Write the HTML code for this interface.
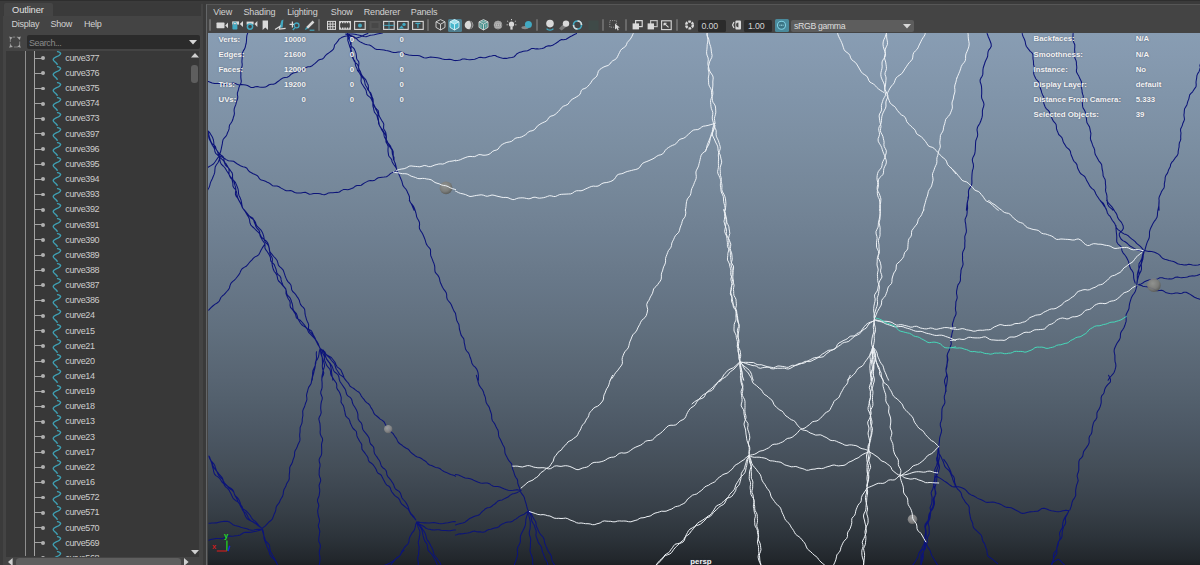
<!DOCTYPE html>
<html><head><meta charset="utf-8"><title>Maya</title>
<style>
html,body{margin:0;padding:0}
body{width:1200px;height:565px;overflow:hidden;position:relative;background:#444444;font-family:"Liberation Sans","DejaVu Sans",sans-serif;font-size:9px;color:#d0d0d0}
div,i,span,svg{position:absolute;display:block}
.topstrip{left:0;top:0;width:1200px;height:4px;background:linear-gradient(to bottom,#2e2e2e 0,#2e2e2e 1.5px,#3b3b3b 1.5px,#3b3b3b 4px)}
.leftstrip{left:0;top:2px;width:3px;height:563px;background:#3b3b3b}
  .midstrip{left:202.5px;top:2px;width:3.5px;height:563px;background:#3a3a3a}
.tabbar{left:3px;top:3px;width:198px;height:13px;background:#3a3a3a}
.tab{left:4px;top:3px;width:49px;height:13px;background:#454545;border-radius:2px 2px 0 0}
.tab span{left:8px;top:1.5px;font-size:9.3px;color:#e0e0e0;white-space:nowrap;letter-spacing:-0.1px}
.menu span{top:18.5px;font-size:9px;color:#d2d2d2;white-space:nowrap;letter-spacing:-0.25px}
.search{left:26.5px;top:35.3px;width:173px;height:13.7px;background:#2b2b2b;border-radius:2px}
.search span{left:2.5px;top:2.3px;color:#8a8a8a;font-size:9px;letter-spacing:-0.42px}
  .list{left:6.4px;top:50.6px;width:192.2px;height:506.5px;background:#383838;overflow:hidden}
.row{left:-6.4px;width:200px;height:15px}
.row span{left:65.3px;top:2.2px;font-size:9px;color:#cdcdcd;white-space:nowrap;letter-spacing:-0.4px}
.row .tk{left:35px;top:7px;width:7px;height:1px;background:#a2a2a2}
.row .dot{left:40.8px;top:5.6px;width:3.8px;height:3.8px;border-radius:2px;background:#b0b0b0}
.row .ci{left:51.5px;top:0.6px}
.vline{left:19px;top:0;width:1px;height:505px;background:#8e8e8e}
.vline2{left:28px;top:0;width:1px;height:505px;background:#a4a4a4}
.vpframe{left:205.8px;top:4px;width:994.2px;height:561px;border-left:1.5px solid #646668;border-top:1px solid #565656;box-sizing:border-box}
.vp{left:207.5px;top:32.7px;width:992.5px;height:549px;background:linear-gradient(to bottom,rgb(136,157,179) 0.00%,rgb(134,154,176) 4.17%,rgb(131,151,172) 8.33%,rgb(128,148,169) 12.50%,rgb(126,145,165) 16.67%,rgb(123,142,161) 20.83%,rgb(120,138,157) 25.00%,rgb(117,135,153) 29.17%,rgb(114,131,149) 33.33%,rgb(110,127,145) 37.50%,rgb(107,123,140) 41.67%,rgb(103,119,136) 45.83%,rgb(100,115,131) 50.00%,rgb(96,111,126) 54.17%,rgb(92,106,120) 58.33%,rgb(88,101,115) 62.50%,rgb(83,96,109) 66.67%,rgb(78,90,103) 70.83%,rgb(73,84,96) 75.00%,rgb(68,78,88) 79.17%,rgb(61,70,80) 83.33%,rgb(54,62,70) 87.50%,rgb(45,52,59) 91.67%,rgb(34,39,44) 95.83%,rgb(13,13,13) 100.00%);overflow:hidden}
.hud{font-family:"Liberation Sans",sans-serif;font-weight:bold;font-size:7.8px;line-height:10px;color:#f4f4f4;white-space:nowrap;text-shadow:0 0 1.5px rgba(60,70,95,.75)}
  .vmenu span{top:6.8px;font-size:9px;color:#d2d2d2;white-space:nowrap;letter-spacing:-0.15px}
.fld{top:20px;height:11.5px;background:#2b2b2b;border-radius:1.5px}
.fld span{top:1.3px;font-size:8.8px;color:#d4d4d4;letter-spacing:-0.2px}
</style></head><body>
<div class="topstrip"></div><div class="leftstrip"></div><div class="midstrip"></div>
<div class="tabbar"></div>
<div class="tab"><span>Outliner</span></div>
<div class="menu"><span style="left:11.6px">Display</span><span style="left:50.5px">Show</span><span style="left:84px">Help</span></div>
<svg width="14" height="14" viewBox="0 0 14 14" style="left:8.3px;top:34.8px"><rect x="2.4" y="2.2" width="9.2" height="9.8" rx="2.6" fill="none" stroke="#787878" stroke-width="1.2" stroke-dasharray="4.2 1.6" stroke-dashoffset="2"/><path d="M1.2 1.4L4.6 2.4L2.2 4.8Z M12.8 1.4L9.4 2.4L11.8 4.8Z M1.2 12.8L4.6 11.8L2.2 9.4Z M12.8 12.8L9.4 11.8L11.8 9.4Z" fill="#a6a6a6"/></svg>
<div class="search"><span>Search...</span><svg width="8" height="5" viewBox="0 0 8 5" style="left:162px;top:5px"><path d="M0 0H8L4 4.6Z" fill="#d6d6d6"/></svg></div>
<div class="list">
<div class="vline"></div><div class="vline2"></div>
<div class="row" style="top:0.1px"><i class="tk"></i><i class="dot"></i><svg class="ci" width="11" height="14" viewBox="0 0 11 14"><path d="M5.6 0.6 C8.6 1.4 9.6 2.6 7.4 4.2 C5 5.9 1.2 6.6 1.2 8.6 C1.2 10.2 3 10.6 4.4 12.2 L5.2 13.2" fill="none" stroke="#3f9fb2" stroke-width="1.4" stroke-linecap="round"/></svg><span>curve377</span></div>
<div class="row" style="top:15.3px"><i class="tk"></i><i class="dot"></i><svg class="ci" width="11" height="14" viewBox="0 0 11 14"><path d="M5.6 0.6 C8.6 1.4 9.6 2.6 7.4 4.2 C5 5.9 1.2 6.6 1.2 8.6 C1.2 10.2 3 10.6 4.4 12.2 L5.2 13.2" fill="none" stroke="#3f9fb2" stroke-width="1.4" stroke-linecap="round"/></svg><span>curve376</span></div>
<div class="row" style="top:30.4px"><i class="tk"></i><i class="dot"></i><svg class="ci" width="11" height="14" viewBox="0 0 11 14"><path d="M5.6 0.6 C8.6 1.4 9.6 2.6 7.4 4.2 C5 5.9 1.2 6.6 1.2 8.6 C1.2 10.2 3 10.6 4.4 12.2 L5.2 13.2" fill="none" stroke="#3f9fb2" stroke-width="1.4" stroke-linecap="round"/></svg><span>curve375</span></div>
<div class="row" style="top:45.6px"><i class="tk"></i><i class="dot"></i><svg class="ci" width="11" height="14" viewBox="0 0 11 14"><path d="M5.6 0.6 C8.6 1.4 9.6 2.6 7.4 4.2 C5 5.9 1.2 6.6 1.2 8.6 C1.2 10.2 3 10.6 4.4 12.2 L5.2 13.2" fill="none" stroke="#3f9fb2" stroke-width="1.4" stroke-linecap="round"/></svg><span>curve374</span></div>
<div class="row" style="top:60.7px"><i class="tk"></i><i class="dot"></i><svg class="ci" width="11" height="14" viewBox="0 0 11 14"><path d="M5.6 0.6 C8.6 1.4 9.6 2.6 7.4 4.2 C5 5.9 1.2 6.6 1.2 8.6 C1.2 10.2 3 10.6 4.4 12.2 L5.2 13.2" fill="none" stroke="#3f9fb2" stroke-width="1.4" stroke-linecap="round"/></svg><span>curve373</span></div>
<div class="row" style="top:75.8px"><i class="tk"></i><i class="dot"></i><svg class="ci" width="11" height="14" viewBox="0 0 11 14"><path d="M5.6 0.6 C8.6 1.4 9.6 2.6 7.4 4.2 C5 5.9 1.2 6.6 1.2 8.6 C1.2 10.2 3 10.6 4.4 12.2 L5.2 13.2" fill="none" stroke="#3f9fb2" stroke-width="1.4" stroke-linecap="round"/></svg><span>curve397</span></div>
<div class="row" style="top:91.0px"><i class="tk"></i><i class="dot"></i><svg class="ci" width="11" height="14" viewBox="0 0 11 14"><path d="M5.6 0.6 C8.6 1.4 9.6 2.6 7.4 4.2 C5 5.9 1.2 6.6 1.2 8.6 C1.2 10.2 3 10.6 4.4 12.2 L5.2 13.2" fill="none" stroke="#3f9fb2" stroke-width="1.4" stroke-linecap="round"/></svg><span>curve396</span></div>
<div class="row" style="top:106.2px"><i class="tk"></i><i class="dot"></i><svg class="ci" width="11" height="14" viewBox="0 0 11 14"><path d="M5.6 0.6 C8.6 1.4 9.6 2.6 7.4 4.2 C5 5.9 1.2 6.6 1.2 8.6 C1.2 10.2 3 10.6 4.4 12.2 L5.2 13.2" fill="none" stroke="#3f9fb2" stroke-width="1.4" stroke-linecap="round"/></svg><span>curve395</span></div>
<div class="row" style="top:121.3px"><i class="tk"></i><i class="dot"></i><svg class="ci" width="11" height="14" viewBox="0 0 11 14"><path d="M5.6 0.6 C8.6 1.4 9.6 2.6 7.4 4.2 C5 5.9 1.2 6.6 1.2 8.6 C1.2 10.2 3 10.6 4.4 12.2 L5.2 13.2" fill="none" stroke="#3f9fb2" stroke-width="1.4" stroke-linecap="round"/></svg><span>curve394</span></div>
<div class="row" style="top:136.5px"><i class="tk"></i><i class="dot"></i><svg class="ci" width="11" height="14" viewBox="0 0 11 14"><path d="M5.6 0.6 C8.6 1.4 9.6 2.6 7.4 4.2 C5 5.9 1.2 6.6 1.2 8.6 C1.2 10.2 3 10.6 4.4 12.2 L5.2 13.2" fill="none" stroke="#3f9fb2" stroke-width="1.4" stroke-linecap="round"/></svg><span>curve393</span></div>
<div class="row" style="top:151.6px"><i class="tk"></i><i class="dot"></i><svg class="ci" width="11" height="14" viewBox="0 0 11 14"><path d="M5.6 0.6 C8.6 1.4 9.6 2.6 7.4 4.2 C5 5.9 1.2 6.6 1.2 8.6 C1.2 10.2 3 10.6 4.4 12.2 L5.2 13.2" fill="none" stroke="#3f9fb2" stroke-width="1.4" stroke-linecap="round"/></svg><span>curve392</span></div>
<div class="row" style="top:166.8px"><i class="tk"></i><i class="dot"></i><svg class="ci" width="11" height="14" viewBox="0 0 11 14"><path d="M5.6 0.6 C8.6 1.4 9.6 2.6 7.4 4.2 C5 5.9 1.2 6.6 1.2 8.6 C1.2 10.2 3 10.6 4.4 12.2 L5.2 13.2" fill="none" stroke="#3f9fb2" stroke-width="1.4" stroke-linecap="round"/></svg><span>curve391</span></div>
<div class="row" style="top:181.9px"><i class="tk"></i><i class="dot"></i><svg class="ci" width="11" height="14" viewBox="0 0 11 14"><path d="M5.6 0.6 C8.6 1.4 9.6 2.6 7.4 4.2 C5 5.9 1.2 6.6 1.2 8.6 C1.2 10.2 3 10.6 4.4 12.2 L5.2 13.2" fill="none" stroke="#3f9fb2" stroke-width="1.4" stroke-linecap="round"/></svg><span>curve390</span></div>
<div class="row" style="top:197.1px"><i class="tk"></i><i class="dot"></i><svg class="ci" width="11" height="14" viewBox="0 0 11 14"><path d="M5.6 0.6 C8.6 1.4 9.6 2.6 7.4 4.2 C5 5.9 1.2 6.6 1.2 8.6 C1.2 10.2 3 10.6 4.4 12.2 L5.2 13.2" fill="none" stroke="#3f9fb2" stroke-width="1.4" stroke-linecap="round"/></svg><span>curve389</span></div>
<div class="row" style="top:212.2px"><i class="tk"></i><i class="dot"></i><svg class="ci" width="11" height="14" viewBox="0 0 11 14"><path d="M5.6 0.6 C8.6 1.4 9.6 2.6 7.4 4.2 C5 5.9 1.2 6.6 1.2 8.6 C1.2 10.2 3 10.6 4.4 12.2 L5.2 13.2" fill="none" stroke="#3f9fb2" stroke-width="1.4" stroke-linecap="round"/></svg><span>curve388</span></div>
<div class="row" style="top:227.3px"><i class="tk"></i><i class="dot"></i><svg class="ci" width="11" height="14" viewBox="0 0 11 14"><path d="M5.6 0.6 C8.6 1.4 9.6 2.6 7.4 4.2 C5 5.9 1.2 6.6 1.2 8.6 C1.2 10.2 3 10.6 4.4 12.2 L5.2 13.2" fill="none" stroke="#3f9fb2" stroke-width="1.4" stroke-linecap="round"/></svg><span>curve387</span></div>
<div class="row" style="top:242.5px"><i class="tk"></i><i class="dot"></i><svg class="ci" width="11" height="14" viewBox="0 0 11 14"><path d="M5.6 0.6 C8.6 1.4 9.6 2.6 7.4 4.2 C5 5.9 1.2 6.6 1.2 8.6 C1.2 10.2 3 10.6 4.4 12.2 L5.2 13.2" fill="none" stroke="#3f9fb2" stroke-width="1.4" stroke-linecap="round"/></svg><span>curve386</span></div>
<div class="row" style="top:257.6px"><i class="tk"></i><i class="dot"></i><svg class="ci" width="11" height="14" viewBox="0 0 11 14"><path d="M5.6 0.6 C8.6 1.4 9.6 2.6 7.4 4.2 C5 5.9 1.2 6.6 1.2 8.6 C1.2 10.2 3 10.6 4.4 12.2 L5.2 13.2" fill="none" stroke="#3f9fb2" stroke-width="1.4" stroke-linecap="round"/></svg><span>curve24</span></div>
<div class="row" style="top:272.8px"><i class="tk"></i><i class="dot"></i><svg class="ci" width="11" height="14" viewBox="0 0 11 14"><path d="M5.6 0.6 C8.6 1.4 9.6 2.6 7.4 4.2 C5 5.9 1.2 6.6 1.2 8.6 C1.2 10.2 3 10.6 4.4 12.2 L5.2 13.2" fill="none" stroke="#3f9fb2" stroke-width="1.4" stroke-linecap="round"/></svg><span>curve15</span></div>
<div class="row" style="top:287.9px"><i class="tk"></i><i class="dot"></i><svg class="ci" width="11" height="14" viewBox="0 0 11 14"><path d="M5.6 0.6 C8.6 1.4 9.6 2.6 7.4 4.2 C5 5.9 1.2 6.6 1.2 8.6 C1.2 10.2 3 10.6 4.4 12.2 L5.2 13.2" fill="none" stroke="#3f9fb2" stroke-width="1.4" stroke-linecap="round"/></svg><span>curve21</span></div>
<div class="row" style="top:303.1px"><i class="tk"></i><i class="dot"></i><svg class="ci" width="11" height="14" viewBox="0 0 11 14"><path d="M5.6 0.6 C8.6 1.4 9.6 2.6 7.4 4.2 C5 5.9 1.2 6.6 1.2 8.6 C1.2 10.2 3 10.6 4.4 12.2 L5.2 13.2" fill="none" stroke="#3f9fb2" stroke-width="1.4" stroke-linecap="round"/></svg><span>curve20</span></div>
<div class="row" style="top:318.2px"><i class="tk"></i><i class="dot"></i><svg class="ci" width="11" height="14" viewBox="0 0 11 14"><path d="M5.6 0.6 C8.6 1.4 9.6 2.6 7.4 4.2 C5 5.9 1.2 6.6 1.2 8.6 C1.2 10.2 3 10.6 4.4 12.2 L5.2 13.2" fill="none" stroke="#3f9fb2" stroke-width="1.4" stroke-linecap="round"/></svg><span>curve14</span></div>
<div class="row" style="top:333.4px"><i class="tk"></i><i class="dot"></i><svg class="ci" width="11" height="14" viewBox="0 0 11 14"><path d="M5.6 0.6 C8.6 1.4 9.6 2.6 7.4 4.2 C5 5.9 1.2 6.6 1.2 8.6 C1.2 10.2 3 10.6 4.4 12.2 L5.2 13.2" fill="none" stroke="#3f9fb2" stroke-width="1.4" stroke-linecap="round"/></svg><span>curve19</span></div>
<div class="row" style="top:348.5px"><i class="tk"></i><i class="dot"></i><svg class="ci" width="11" height="14" viewBox="0 0 11 14"><path d="M5.6 0.6 C8.6 1.4 9.6 2.6 7.4 4.2 C5 5.9 1.2 6.6 1.2 8.6 C1.2 10.2 3 10.6 4.4 12.2 L5.2 13.2" fill="none" stroke="#3f9fb2" stroke-width="1.4" stroke-linecap="round"/></svg><span>curve18</span></div>
<div class="row" style="top:363.7px"><i class="tk"></i><i class="dot"></i><svg class="ci" width="11" height="14" viewBox="0 0 11 14"><path d="M5.6 0.6 C8.6 1.4 9.6 2.6 7.4 4.2 C5 5.9 1.2 6.6 1.2 8.6 C1.2 10.2 3 10.6 4.4 12.2 L5.2 13.2" fill="none" stroke="#3f9fb2" stroke-width="1.4" stroke-linecap="round"/></svg><span>curve13</span></div>
<div class="row" style="top:378.8px"><i class="tk"></i><i class="dot"></i><svg class="ci" width="11" height="14" viewBox="0 0 11 14"><path d="M5.6 0.6 C8.6 1.4 9.6 2.6 7.4 4.2 C5 5.9 1.2 6.6 1.2 8.6 C1.2 10.2 3 10.6 4.4 12.2 L5.2 13.2" fill="none" stroke="#3f9fb2" stroke-width="1.4" stroke-linecap="round"/></svg><span>curve23</span></div>
<div class="row" style="top:394.0px"><i class="tk"></i><i class="dot"></i><svg class="ci" width="11" height="14" viewBox="0 0 11 14"><path d="M5.6 0.6 C8.6 1.4 9.6 2.6 7.4 4.2 C5 5.9 1.2 6.6 1.2 8.6 C1.2 10.2 3 10.6 4.4 12.2 L5.2 13.2" fill="none" stroke="#3f9fb2" stroke-width="1.4" stroke-linecap="round"/></svg><span>curve17</span></div>
<div class="row" style="top:409.1px"><i class="tk"></i><i class="dot"></i><svg class="ci" width="11" height="14" viewBox="0 0 11 14"><path d="M5.6 0.6 C8.6 1.4 9.6 2.6 7.4 4.2 C5 5.9 1.2 6.6 1.2 8.6 C1.2 10.2 3 10.6 4.4 12.2 L5.2 13.2" fill="none" stroke="#3f9fb2" stroke-width="1.4" stroke-linecap="round"/></svg><span>curve22</span></div>
<div class="row" style="top:424.3px"><i class="tk"></i><i class="dot"></i><svg class="ci" width="11" height="14" viewBox="0 0 11 14"><path d="M5.6 0.6 C8.6 1.4 9.6 2.6 7.4 4.2 C5 5.9 1.2 6.6 1.2 8.6 C1.2 10.2 3 10.6 4.4 12.2 L5.2 13.2" fill="none" stroke="#3f9fb2" stroke-width="1.4" stroke-linecap="round"/></svg><span>curve16</span></div>
<div class="row" style="top:439.4px"><i class="tk"></i><i class="dot"></i><svg class="ci" width="11" height="14" viewBox="0 0 11 14"><path d="M5.6 0.6 C8.6 1.4 9.6 2.6 7.4 4.2 C5 5.9 1.2 6.6 1.2 8.6 C1.2 10.2 3 10.6 4.4 12.2 L5.2 13.2" fill="none" stroke="#3f9fb2" stroke-width="1.4" stroke-linecap="round"/></svg><span>curve572</span></div>
<div class="row" style="top:454.6px"><i class="tk"></i><i class="dot"></i><svg class="ci" width="11" height="14" viewBox="0 0 11 14"><path d="M5.6 0.6 C8.6 1.4 9.6 2.6 7.4 4.2 C5 5.9 1.2 6.6 1.2 8.6 C1.2 10.2 3 10.6 4.4 12.2 L5.2 13.2" fill="none" stroke="#3f9fb2" stroke-width="1.4" stroke-linecap="round"/></svg><span>curve571</span></div>
<div class="row" style="top:469.8px"><i class="tk"></i><i class="dot"></i><svg class="ci" width="11" height="14" viewBox="0 0 11 14"><path d="M5.6 0.6 C8.6 1.4 9.6 2.6 7.4 4.2 C5 5.9 1.2 6.6 1.2 8.6 C1.2 10.2 3 10.6 4.4 12.2 L5.2 13.2" fill="none" stroke="#3f9fb2" stroke-width="1.4" stroke-linecap="round"/></svg><span>curve570</span></div>
<div class="row" style="top:484.9px"><i class="tk"></i><i class="dot"></i><svg class="ci" width="11" height="14" viewBox="0 0 11 14"><path d="M5.6 0.6 C8.6 1.4 9.6 2.6 7.4 4.2 C5 5.9 1.2 6.6 1.2 8.6 C1.2 10.2 3 10.6 4.4 12.2 L5.2 13.2" fill="none" stroke="#3f9fb2" stroke-width="1.4" stroke-linecap="round"/></svg><span>curve569</span></div>
<div class="row" style="top:500.0px"><i class="tk"></i><i class="dot"></i><svg class="ci" width="11" height="14" viewBox="0 0 11 14"><path d="M5.6 0.6 C8.6 1.4 9.6 2.6 7.4 4.2 C5 5.9 1.2 6.6 1.2 8.6 C1.2 10.2 3 10.6 4.4 12.2 L5.2 13.2" fill="none" stroke="#3f9fb2" stroke-width="1.4" stroke-linecap="round"/></svg><span>curve568</span></div>
<svg width="8" height="5" viewBox="0 0 8 5" style="left:184.9px;top:2px"><path d="M0 4.6H8L4 0Z" fill="#d0d0d0"/></svg>
<div style="left:185px;top:14.5px;width:7px;height:17.5px;border-radius:3px;background:#5e5e5e"></div>
<svg width="8" height="5" viewBox="0 0 8 5" style="left:184.7px;top:499.6px"><path d="M0 0H8L4 4.6Z" fill="#d0d0d0"/></svg>
</div>
<svg width="5" height="8" viewBox="0 0 5 8" style="left:7.5px;top:557.5px"><path d="M4.6 0V8L0 4Z" fill="#d0d0d0"/></svg>
<div style="left:15.5px;top:557.8px;width:165px;height:9px;border-radius:3.5px;background:#5e5e5e"></div>
<svg width="5" height="8" viewBox="0 0 5 8" style="left:183.5px;top:557.5px"><path d="M0 0V8L4.6 4Z" fill="#d0d0d0"/></svg>
<div class="vpframe"></div>
<div class="vmenu"><span style="left:213.3px">View</span><span style="left:243.5px">Shading</span><span style="left:287.2px">Lighting</span><span style="left:330.8px">Show</span><span style="left:363.7px">Renderer</span><span style="left:410.8px">Panels</span></div>
<div style="left:209.1px;top:19.3px;width:2.2px;height:12px;border-radius:1.1px;background:#6a6a6a"></div>
<svg width="13" height="14" viewBox="0 0 13 14" style="left:216px;top:18px"><rect x="0.5" y="4.6" width="8" height="5.6" rx="0.6" fill="#d9d9d9"/><path d="M12 4.6V10.2L9.2 7.4Z" fill="#d9d9d9"/></svg>
<svg width="13" height="14" viewBox="0 0 13 14" style="left:231px;top:18px"><rect x="1.2" y="3.4" width="6.8" height="3.2" fill="#d9d9d9"/><path d="M12 3V9L8.8 6Z" fill="#d9d9d9"/><rect x="1.4" y="6.6" width="5" height="5" rx="0.8" fill="#41a9c2"/><path d="M2.4 6.8V5.6a1.5 1.5 0 0 1 3 0V6.8" fill="none" stroke="#41a9c2" stroke-width="1"/></svg>
<svg width="13" height="14" viewBox="0 0 13 14" style="left:246px;top:18px"><rect x="0.6" y="3.6" width="7" height="3" fill="#d9d9d9"/><path d="M11.4 3V9L8.4 6Z" fill="#d9d9d9"/><circle cx="4" cy="8.6" r="2.6" fill="none" stroke="#41a9c2" stroke-width="1.5"/></svg>
<svg width="7" height="14" viewBox="0 0 7 14" style="left:262.4px;top:18px"><path d="M0.6 2.6H6V12L3.3 9.6L0.6 12Z" fill="#d9d9d9"/></svg>
<svg width="13" height="14" viewBox="0 0 13 14" style="left:273.5px;top:18px"><path d="M7.4 2.4L9.4 1.4L8.6 9.4L5.4 9.8Z" fill="#41a9c2"/><path d="M1 11.6L6 8.4L5.4 11L11.6 10.4" fill="none" stroke="#d9d9d9" stroke-width="1.2"/></svg>
<svg width="12" height="14" viewBox="0 0 12 14" style="left:288.6px;top:18px"><path d="M0.6 6.4H6M3.4 3.4V9.4" stroke="#d9d9d9" stroke-width="1.2"/><circle cx="7.6" cy="7.4" r="2.4" fill="none" stroke="#41a9c2" stroke-width="1.3"/><path d="M6 9.6L3.8 12" stroke="#41a9c2" stroke-width="1.4"/></svg>
<svg width="12" height="14" viewBox="0 0 12 14" style="left:303.6px;top:18px"><path d="M2.2 9L8.6 2.6L10.4 4.4L4 10.8Z" fill="#d9d9d9"/><path d="M0.8 12L2.2 9L4 10.8Z" fill="#41a9c2"/><path d="M5.6 12.2H10.4" stroke="#41a9c2" stroke-width="1.1"/></svg>
<div style="left:318.29999999999995px;top:19.3px;width:2.2px;height:12px;border-radius:1.1px;background:#6a6a6a"></div>
<svg width="9" height="14" viewBox="0 0 9 14" style="left:326.8px;top:18px"><rect x="0.5" y="3.4" width="8" height="8" fill="none" stroke="#d9d9d9" stroke-width="1"/><path d="M3.2 3.4V11.4M5.8 3.4V11.4M0.5 6.1H8.5M0.5 8.7H8.5" stroke="#d9d9d9" stroke-width="0.9"/></svg>
<svg width="12" height="14" viewBox="0 0 12 14" style="left:339.2px;top:18px"><rect x="0.6" y="3.6" width="10.8" height="7.6" fill="none" stroke="#d9d9d9" stroke-width="1.1"/><path d="M0.6 4.4H11.4M0.6 10.4H11.4" stroke="#d9d9d9" stroke-width="1.6" stroke-dasharray="1.4 1"/></svg>
<svg width="12" height="14" viewBox="0 0 12 14" style="left:353.8px;top:18px"><rect x="0.6" y="3.4" width="10.6" height="8" fill="none" stroke="#d9d9d9" stroke-width="1.1"/><circle cx="6" cy="7.4" r="2" fill="#41a9c2"/></svg>
<svg width="12" height="14" viewBox="0 0 12 14" style="left:368.6px;top:18px"><rect x="0.5" y="3" width="11" height="9" fill="#525252"/><rect x="2.6" y="5" width="6.8" height="5" fill="#474747"/></svg>
<svg width="12" height="14" viewBox="0 0 12 14" style="left:383px;top:18px"><rect x="0.6" y="3.4" width="10.6" height="8" fill="none" stroke="#d9d9d9" stroke-width="1.1"/><path d="M6 3.4V11.4M0.6 7.4H11.2" stroke="#41a9c2" stroke-width="0.9"/></svg>
<svg width="12" height="14" viewBox="0 0 12 14" style="left:397.2px;top:18px"><rect x="0.6" y="3.4" width="10.6" height="8" fill="none" stroke="#d9d9d9" stroke-width="1.1"/><circle cx="7" cy="6.4" r="1.7" fill="#41a9c2"/><path d="M1.6 10.6L4.6 7.4L7 10.6Z" fill="#41a9c2"/></svg>
<svg width="12" height="14" viewBox="0 0 12 14" style="left:411.8px;top:18px"><rect x="0.6" y="3.4" width="10.6" height="8" fill="none" stroke="#d9d9d9" stroke-width="1.1"/><path d="M3.4 5.4H8.4M5.9 5.4V10" stroke="#41a9c2" stroke-width="1.2"/></svg>
<div style="left:427.09999999999997px;top:19.3px;width:2.2px;height:12px;border-radius:1.1px;background:#6a6a6a"></div>
<svg width="11" height="14" viewBox="0 0 11 14" style="left:434.6px;top:18px"><path d="M5.5 1.6L10 3.8V9.4L5.5 12L1 9.4V3.8Z M1 3.8L5.5 6.2L10 3.8M5.5 6.2V12" fill="none" stroke="#d9d9d9" stroke-width="0.9"/></svg>
<div style="left:447.6px;top:18.6px;width:14px;height:13.6px;background:#4f7f90;border-radius:1.5px"></div>
<svg width="11" height="14" viewBox="0 0 11 14" style="left:449.2px;top:18px"><path d="M5.5 1.6L10 3.8V9.4L5.5 12L1 9.4V3.8Z" fill="#48b6cc"/><path d="M5.5 1.6L10 3.8L5.5 6.2L1 3.8Z" fill="#9fe0ec"/><path d="M5.5 1.6L10 3.8V9.4L5.5 12L1 9.4V3.8Z M1 3.8L5.5 6.2L10 3.8M5.5 6.2V12" fill="none" stroke="#d9f2f6" stroke-width="0.9"/></svg>
<svg width="10" height="14" viewBox="0 0 10 14" style="left:464px;top:18px"><circle cx="5" cy="7" r="4.3" fill="#d9d9d9"/><path d="M5.4 2.8A4.3 4.3 0 0 1 5.4 11.2A6 6 0 0 0 5.4 2.8Z" fill="#6a6a6a"/></svg>
<svg width="11" height="14" viewBox="0 0 11 14" style="left:478px;top:18px"><path d="M5.5 1.6L10 3.8V9.4L5.5 12L1 9.4V3.8Z" fill="#3f8f8a"/><path d="M5.5 1.6L10 3.8V9.4L5.5 12L1 9.4V3.8Z M1 3.8L5.5 6.2L10 3.8M5.5 6.2V12" fill="none" stroke="#d9d9d9" stroke-width="0.9"/><path d="M3 6.4V9.6M7.8 6.4V9.6M3.4 3.8L7.6 3.8" stroke="#d9d9d9" stroke-width="0.7"/></svg>
<svg width="10" height="14" viewBox="0 0 10 14" style="left:492.6px;top:18px"><circle cx="5" cy="7" r="4.3" fill="#8a8a8a"/><path d="M1.5 5H8.5M1 7H9M1.5 9H8.5M3 3.4V10.6M5 2.8V11.2M7 3.4V10.6" stroke="#d9d9d9" stroke-width="0.9" stroke-dasharray="1 1"/></svg>
<svg width="11" height="14" viewBox="0 0 11 14" style="left:506.4px;top:18px"><circle cx="5.5" cy="6.2" r="2.6" fill="#d9d9d9"/><rect x="4.4" y="8.6" width="2.2" height="3" fill="#d9d9d9"/><path d="M5.5 1V2.2M1.2 3L2.2 3.8M9.8 3L8.8 3.8M0.6 6.8H1.8M10.4 6.8H9.2" stroke="#d9d9d9" stroke-width="0.9"/></svg>
<svg width="12" height="14" viewBox="0 0 12 14" style="left:520.6px;top:18px"><ellipse cx="4" cy="9.6" rx="3.6" ry="1.6" fill="#8a8a8a"/><circle cx="7.4" cy="6.6" r="3.5" fill="#41a9c2"/></svg>
<div style="left:536.3px;top:19.3px;width:2.2px;height:12px;border-radius:1.1px;background:#6a6a6a"></div>
<svg width="10" height="14" viewBox="0 0 10 14" style="left:544.6px;top:18px"><circle cx="5" cy="5.6" r="3.8" fill="#d9d9d9"/><path d="M1.6 10.6C3 12.6 7 12.6 8.4 10.6" fill="none" stroke="#41a9c2" stroke-width="1.3"/></svg>
<svg width="12" height="14" viewBox="0 0 12 14" style="left:557.6px;top:18px"><path d="M1 10.6L6 5.2L9 8.2L3.6 12.6Z" fill="#7a7a7a"/><circle cx="8" cy="5.6" r="3.2" fill="#d9d9d9"/></svg>
<svg width="11" height="14" viewBox="0 0 11 14" style="left:572.2px;top:18px"><circle cx="5.5" cy="7" r="4" fill="none" stroke="#41a9c2" stroke-width="1.6"/><path d="M5.5 3A4 4 0 0 1 9.5 7" fill="none" stroke="#d9d9d9" stroke-width="1.6"/><path d="M5.5 11A4 4 0 0 1 1.5 7" fill="none" stroke="#d9d9d9" stroke-width="1.6"/></svg>
<svg width="11" height="14" viewBox="0 0 11 14" style="left:587.6px;top:18px"><rect x="0.5" y="2.4" width="10" height="10" fill="#3f4a48"/></svg>
<div style="left:602.1px;top:19.3px;width:2.2px;height:12px;border-radius:1.1px;background:#6a6a6a"></div>
<svg width="12" height="14" viewBox="0 0 12 14" style="left:608.8px;top:18px"><rect x="0.8" y="2.6" width="6.6" height="6.6" fill="none" stroke="#9a9a9a" stroke-width="0.9" stroke-dasharray="1.2 1"/><path d="M6 5.6L10.8 9.6L8.8 9.8L9.8 12L8.6 12.4L7.8 10.2L6 11.4Z" fill="#d9d9d9"/></svg>
<div style="left:624.5px;top:19.3px;width:2.2px;height:12px;border-radius:1.1px;background:#6a6a6a"></div>
<svg width="11" height="14" viewBox="0 0 11 14" style="left:632px;top:18px"><rect x="3.6" y="2.6" width="6.6" height="6" fill="none" stroke="#d9d9d9" stroke-width="1.2"/><rect x="0.6" y="5.4" width="6.4" height="6" fill="#d9d9d9"/></svg>
<svg width="11" height="14" viewBox="0 0 11 14" style="left:646.6px;top:18px"><rect x="3.6" y="2.6" width="6.6" height="6" fill="none" stroke="#bdbdbd" stroke-width="1.2"/><rect x="0.6" y="5.4" width="6.4" height="6" fill="#d9d9d9"/></svg>
<svg width="11" height="14" viewBox="0 0 11 14" style="left:660.6px;top:18px"><rect x="0.6" y="2.8" width="9.6" height="8.8" fill="none" stroke="#d9d9d9" stroke-width="1.1"/><path d="M3 5.2L7.6 9.4M3 5.2H5.6M3 5.2V7.6" stroke="#d9d9d9" stroke-width="1.1" fill="none"/></svg>
<div style="left:676.1999999999999px;top:19.3px;width:2.2px;height:12px;border-radius:1.1px;background:#6a6a6a"></div>
<svg width="11" height="14" viewBox="0 0 11 14" style="left:684.4px;top:18px"><circle cx="5.5" cy="7" r="3.4" fill="none" stroke="#d9d9d9" stroke-width="2.4" stroke-dasharray="2.6 1"/></svg>
<div class="fld" style="left:698px;width:28.4px"><span style="left:3.6px">0.00</span></div>
<svg width="10" height="14" viewBox="0 0 10 14" style="left:731.6px;top:18px"><path d="M2 4L0.6 7L2 10" fill="none" stroke="#d9d9d9" stroke-width="1.2"/><rect x="3.4" y="2.6" width="5.6" height="8.8" rx="1" fill="#d9d9d9"/><path d="M6.4 4.6A2.4 2.4 0 0 0 6.4 9.4Z" fill="#444"/></svg>
<div class="fld" style="left:743.7px;width:28.8px"><span style="left:4.4px">1.00</span></div>
<div style="left:774.8px;top:18.6px;width:14px;height:13.6px;background:#4a8a9c;border-radius:1.5px"></div>
<svg width="11" height="14" viewBox="0 0 11 14" style="left:776.3px;top:18px"><circle cx="5.5" cy="7.2" r="4" fill="#3b7484" stroke="#7fd0e2" stroke-width="1.1"/><path d="M3.4 7.2H7.6" stroke="#a8e4f0" stroke-width="1" stroke-dasharray="1 0.6"/></svg>
<div style="left:790.5px;top:19.6px;width:123.5px;height:12px;background:#5d5d5d;border-radius:2px"><span style="left:3.6px;top:1.2px;font-size:8.7px;color:#dedede;letter-spacing:-0.35px;white-space:nowrap">sRGB gamma</span><svg width="8" height="5" viewBox="0 0 8 5" style="left:112.6px;top:4px"><path d="M0 0H8L4 4.4Z" fill="#d8d8d8"/></svg></div>
<div class="vp">
<svg width="992.5" height="532.3" viewBox="207.5 32.7 992.5 532.3" style="left:0;top:0">
<defs><radialGradient id="sg" cx="40%" cy="35%" r="70%"><stop offset="0" stop-color="#a6a6a6"/><stop offset="0.6" stop-color="#8a8a8a"/><stop offset="1" stop-color="#646464"/></radialGradient><radialGradient id="sd" cx="42%" cy="36%" r="70%"><stop offset="0" stop-color="#959590"/><stop offset="0.6" stop-color="#7c7c77"/><stop offset="1" stop-color="#50504c"/></radialGradient></defs>
<path d="M248.0 30.0 L247.7 31.3 L247.1 33.1 L246.4 35.1 L246.1 37.6 L246.0 40.2 L245.7 42.9 L245.2 44.7 L244.8 46.7 L244.1 48.6 L242.8 50.6 L241.8 52.7 L241.6 55.0 L241.7 57.3 L241.5 59.6 L241.4 61.8 L241.7 63.9 L241.6 66.0 L240.8 68.1 L240.2 70.2 L240.3 72.4 L240.4 74.5 L240.3 76.7 L240.5 78.8 L240.8 80.8 L240.5 82.7 L239.5 84.8 L238.5 86.9 L238.1 88.9 L237.5 90.8 L236.9 92.6 L236.9 94.6 L237.3 96.6 L237.1 98.5 L236.3 100.6 L235.7 102.6 L235.2 104.6 L234.4 106.5 L233.7 108.5 L233.6 110.7 L233.9 113.0 L233.6 115.0 L232.9 116.9 L232.4 119.0 L231.6 121.0 L230.4 122.9 L229.1 124.7 L228.7 126.6 L228.6 128.6 L227.9 130.6 L227.0 132.5 L226.3 134.4 L225.3 136.1 L223.9 137.6 L222.6 139.2 L222.1 141.3 L221.8 143.6 L221.3 145.9 L220.8 148.4 L220.3 150.7 L219.6 152.8 L218.8 154.5 L218.4 155.8 M203.4 125.5 L204.4 127.2 L206.3 130.5 L207.3 131.9 L208.2 133.8 L208.8 136.1 L209.5 138.5 L210.3 140.8 L211.3 143.0 L213.2 144.6 L214.9 146.2 L215.5 148.2 L216.2 150.1 L217.6 151.7 L219.0 153.3 L220.7 155.0 L222.5 156.2 L223.3 158.0 L223.5 160.3 L224.4 162.2 L225.8 163.9 L226.9 165.8 L227.9 167.6 L228.6 169.4 L228.5 171.9 L228.5 174.2 L229.7 175.9 L230.9 177.5 L231.5 179.4 L232.0 181.3 L232.4 183.4 L232.4 185.6 L233.4 187.6 L235.1 189.3 L236.0 191.4 L236.3 193.6 L236.7 195.7 L237.4 197.6 L238.4 200.1 L239.9 202.4 L241.1 204.6 L241.7 206.6 L242.3 208.0 M203.4 125.5 L204.7 127.0 L207.0 130.1 L208.3 131.4 L209.7 133.1 L210.9 135.2 L212.1 137.3 L212.9 139.7 L213.3 142.1 L213.4 144.4 L214.0 146.7 L215.2 148.4 L216.4 150.0 L217.2 151.9 L217.8 154.0 L218.6 156.2 L219.2 158.1 L219.5 160.2 L219.9 162.3 L221.0 164.1 L222.7 165.7 L224.2 167.2 L225.3 169.0 L226.3 170.7 L227.5 172.4 L228.6 174.2 L229.3 176.1 L230.2 177.8 L231.8 179.3 L233.6 180.6 L235.0 182.3 L235.9 184.3 L236.7 186.4 L237.5 188.6 L237.9 190.8 L238.0 193.1 L238.5 195.1 L239.4 196.9 L240.4 199.4 L241.0 202.0 L241.4 204.5 L241.9 206.6 L242.3 208.0 M203.4 125.5 L204.6 127.0 L206.7 130.2 L207.6 131.8 L208.1 133.9 L208.1 136.4 L208.7 138.8 L209.9 141.0 L211.0 143.2 L212.0 145.2 L213.3 147.1 L214.1 149.0 L214.4 151.2 L215.2 153.1 L216.9 154.6 L218.6 156.2 L220.0 157.6 L221.6 159.0 L223.2 160.5 L224.0 162.5 L224.8 164.5 L226.2 166.1 L227.9 167.6 L229.1 169.1 L230.4 170.9 L231.6 172.6 L232.1 174.6 L232.0 176.9 L232.3 179.0 L233.2 180.8 L233.9 182.8 L234.4 184.9 L235.1 187.0 L235.4 189.2 L235.0 191.7 L234.9 194.0 L235.7 196.0 L237.1 197.7 L238.4 200.1 L239.7 202.5 L240.9 204.7 L241.6 206.7 L242.3 208.0 M206.6 167.6 L208.3 166.5 L210.8 165.1 L213.2 163.4 L214.6 161.5 L216.0 159.4 L217.3 157.6 L218.4 156.4 M207.2 189.6 L207.8 188.4 L208.7 186.9 L209.3 185.0 L209.8 182.8 L210.7 180.6 L211.8 178.4 L212.7 176.2 L213.6 174.1 L214.2 172.1 L214.4 169.5 L214.7 166.8 L215.9 164.5 L217.4 162.5 L218.4 160.5 L218.9 158.7 L219.3 157.4 M206.6 81.0 L207.9 81.3 L209.7 81.9 L211.7 82.8 L214.1 83.3 L216.8 83.1 L219.4 83.2 L221.3 84.0 L223.4 84.3 L225.6 84.3 L227.9 84.2 L230.2 83.5 L232.5 82.8 L234.8 83.1 L236.8 84.2 L238.9 84.6 L241.0 84.3 L243.1 84.4 L245.1 84.8 L247.0 85.2 L248.8 86.2 L250.7 87.3 L252.8 87.3 L254.8 86.4 L256.7 86.3 L258.8 86.8 L260.8 87.0 L262.9 87.0 L264.9 86.8 L266.8 85.7 L268.6 84.4 L270.6 83.9 L272.9 84.0 L274.9 83.2 L276.7 81.7 L278.5 80.4 L280.3 79.0 L282.2 77.8 L284.4 77.3 L286.8 77.0 L288.8 75.8 L290.6 73.9 L292.7 72.7 L295.0 72.1 L297.1 71.4 L299.2 70.9 L300.9 70.5 L303.5 68.9 L305.0 67.4 L307.5 66.5 L309.5 66.5 L311.2 65.8 L312.9 64.4 L314.6 63.1 L316.2 61.5 L317.7 60.0 L319.6 59.3 L321.9 58.8 L323.5 57.3 L324.8 55.4 L326.3 54.0 L327.9 52.9 L329.4 51.8 L331.2 50.5 L332.9 48.9 L333.7 46.8 L334.0 44.7 L335.3 43.4 L337.3 40.8 L338.6 38.8 L341.0 37.3 L343.6 36.3 L346.7 35.4 M346.7 32.5 L347.0 33.8 L347.3 35.6 L347.3 37.7 L347.3 40.1 L348.0 42.4 L348.8 44.7 L349.3 46.5 L350.0 48.2 L350.8 50.0 L350.9 52.0 L350.9 54.4 L351.7 56.7 L353.0 59.3 L353.7 60.8 L354.8 62.3 L356.5 63.7 L357.6 65.4 L358.1 67.4 L358.9 69.4 L359.9 71.3 L360.7 73.4 L361.6 75.4 L363.3 77.2 L365.0 79.0 L365.9 81.0 L366.8 83.1 L367.7 84.8 L367.9 86.9 L367.9 89.1 L368.6 91.0 L369.6 92.9 L370.3 94.9 L371.0 96.9 L372.0 98.8 L372.5 101.0 L372.3 103.4 L372.4 105.7 L373.0 107.7 L373.4 109.8 L373.9 111.8 L375.2 113.5 L376.4 115.2 L376.9 117.3 L377.4 119.3 L378.2 121.3 L378.6 123.3 L379.0 125.5 L380.1 127.3 L381.7 129.0 L382.7 130.8 L383.7 132.6 L384.9 134.3 L385.5 136.1 L385.5 138.1 L386.0 139.8 L386.9 141.3 L387.9 143.6 L388.8 145.8 L390.3 147.8 L391.5 149.7 L391.7 151.8 L391.9 153.8 L392.5 155.6 L392.8 157.3 L392.9 159.0 L393.5 160.3 L394.8 163.2 L395.4 165.5 L395.8 167.3 L396.1 168.5 M346.7 32.5 L346.8 33.9 L347.1 35.6 L347.8 37.6 L349.0 39.7 L349.9 41.9 L350.1 44.3 L351.0 46.0 L352.6 47.4 L353.9 48.9 L354.7 50.8 L355.5 52.8 L355.9 55.2 L356.1 58.1 L356.9 59.7 L358.1 61.1 L358.5 63.0 L358.2 65.2 L358.1 67.4 L358.3 69.6 L358.6 71.8 L359.5 73.8 L360.6 75.8 L360.7 78.2 L360.5 80.8 L361.1 83.0 L362.4 84.9 L363.4 86.6 L364.6 88.3 L365.6 90.1 L366.0 92.2 L366.5 94.3 L368.0 95.9 L369.9 97.4 L371.1 99.2 L371.9 101.2 L372.8 103.2 L373.4 105.2 L374.4 107.1 L376.1 108.7 L377.7 110.3 L378.1 112.4 L378.3 114.5 L379.1 116.4 L380.1 118.3 L381.2 120.2 L382.5 122.1 L383.3 124.0 L383.1 126.3 L383.1 128.5 L384.2 130.3 L385.2 132.1 L385.6 134.1 L385.9 136.0 L385.9 138.0 L385.4 140.0 L385.5 141.8 L386.8 144.0 L387.7 146.2 L387.5 148.7 L387.5 151.0 L387.8 153.1 L388.1 155.1 L389.0 156.7 L390.4 158.1 L391.3 159.6 L391.5 161.1 L393.0 163.9 L394.5 165.9 L395.5 167.4 L396.1 168.5 M346.7 32.5 L347.4 33.7 L348.1 35.4 L348.8 37.3 L349.9 39.4 L350.6 41.7 L350.6 44.1 L350.6 46.1 L350.5 48.1 L350.1 50.2 L350.4 52.2 L351.5 54.2 L352.2 56.5 L353.2 59.2 L354.3 60.6 L354.8 62.3 L354.8 64.3 L355.5 66.2 L356.4 68.0 L357.0 70.1 L358.3 71.9 L360.1 73.6 L361.2 75.6 L362.3 77.6 L363.7 79.5 L364.3 81.7 L364.6 84.0 L365.5 85.7 L366.6 87.5 L367.3 89.4 L368.7 91.0 L370.2 92.6 L371.0 94.6 L371.6 96.6 L372.5 98.6 L372.7 100.8 L372.9 103.1 L373.8 105.1 L374.7 107.0 L375.3 109.0 L376.3 110.8 L377.3 112.7 L377.5 114.8 L377.5 117.0 L378.0 119.1 L378.0 121.3 L378.1 123.5 L379.2 125.4 L380.3 127.2 L381.0 129.2 L382.1 131.0 L383.2 132.8 L383.5 134.8 L383.9 136.7 L384.9 138.3 L385.5 140.0 L386.4 141.5 L388.3 143.5 L389.8 145.5 L390.8 147.6 L391.9 149.5 L392.7 151.4 L392.7 153.5 L392.8 155.5 L393.5 157.1 L393.5 158.8 L393.6 160.3 L394.7 163.3 L395.3 165.6 L395.6 167.3 L396.1 168.5 M396.1 169.2 L396.5 170.5 L397.4 172.1 L398.4 173.9 L399.3 176.1 L400.3 178.5 L401.3 180.8 L401.9 183.1 L402.4 185.1 L403.7 187.0 L405.3 188.7 L406.5 190.7 L407.3 192.8 L408.3 194.7 L409.0 196.7 L408.9 198.7 L409.4 201.2 L410.6 203.3 L411.6 205.3 L412.4 207.2 L413.1 208.8 L413.6 209.9 M219.3 155.8 L220.5 156.3 L222.0 157.1 L223.8 158.0 L225.7 159.3 L227.9 160.4 L230.5 160.6 L233.1 161.0 L235.1 162.4 L236.9 163.7 L238.7 164.7 L240.5 165.8 L242.4 166.5 L244.7 166.9 L246.4 167.9 L247.6 169.9 L249.1 171.5 L250.9 172.4 L252.7 173.4 L254.6 174.3 L256.5 175.1 L257.9 176.6 L259.1 178.6 L260.7 179.8 L262.9 180.2 L264.9 180.9 L266.8 181.9 L268.7 182.8 L270.4 184.0 L272.0 185.4 L274.1 185.8 L276.5 185.7 L278.5 186.4 L280.2 187.6 L282.1 188.6 L284.0 189.6 L285.8 190.4 L287.9 190.4 L290.1 190.2 L292.1 191.0 L294.1 192.2 L296.3 192.7 L298.4 192.7 L300.5 192.7 L302.7 192.3 L304.8 192.0 L306.9 192.9 L308.9 193.9 L311.0 193.8 L313.3 193.3 L315.4 193.3 L317.6 193.2 L319.7 193.4 L321.8 194.1 L323.9 194.5 L326.0 193.7 L328.0 192.6 L330.1 192.4 L332.3 192.4 L334.4 192.2 L336.7 192.1 L338.9 191.7 L340.8 190.3 L342.8 189.3 L345.2 189.3 L347.3 189.5 L349.2 188.9 L351.1 188.3 L353.0 187.4 L354.6 186.0 L356.5 185.2 L358.7 185.3 L360.7 184.9 L362.4 183.7 L364.1 182.6 L366.0 181.6 L367.8 180.6 L369.9 180.2 L372.2 180.4 L374.3 179.9 L376.0 178.5 L377.8 177.5 L379.7 177.2 L381.6 176.9 L383.5 176.8 L386.0 176.4 L388.1 175.1 L389.9 173.3 L391.8 172.3 L393.6 171.6 L395.1 170.8 L396.1 170.1 M346.7 33.2 L347.9 34.0 L349.5 34.9 L351.6 35.8 L353.9 36.8 L355.9 38.3 L357.6 40.0 L359.2 41.3 L361.0 42.2 L362.8 43.1 L364.8 43.9 L366.8 44.4 L368.9 44.8 L370.8 45.6 L372.6 47.0 L374.3 48.4 L376.3 49.2 L378.7 49.3 L381.0 49.4 L383.5 49.8 L385.3 50.2 L387.1 50.5 L389.1 51.0 L391.1 51.8 L393.1 52.3 L395.4 52.2 L397.7 51.7 L400.1 51.7 L402.5 52.5 L404.3 53.6 L406.2 54.3 L408.2 54.7 L410.3 55.0 L412.4 55.3 L414.6 55.3 L416.9 55.1 L419.1 55.5 L421.2 56.4 L423.4 57.4 L425.6 57.6 L427.9 57.2 L430.1 56.8 L432.4 56.9 L434.7 57.2 L437.1 57.5 L439.5 58.0 L441.9 58.7 L444.2 59.3 L446.5 59.2 L448.7 59.0 L450.6 59.2 L452.3 59.7 L453.8 60.1 L455.0 60.3 M346.7 33.2 L348.0 33.5 L349.8 33.8 L352.1 33.8 L354.4 33.9 L356.8 34.5 L359.0 34.9 L361.1 35.4 L363.3 36.1 L365.6 36.4 L367.8 35.7 L369.8 35.0 L371.9 34.8 L373.8 34.4 L376.6 33.7 L379.4 33.2 L381.8 32.6 L383.3 31.9 M345.1 33.8 L346.4 34.3 L348.2 35.0 L350.2 36.0 L352.3 37.2 L354.7 37.9 L356.9 37.5 L359.3 36.7 L361.8 35.7 L364.0 34.5 L366.0 33.6 L367.4 33.2 M455.0 60.3 L456.3 60.1 L457.9 60.0 L459.8 59.6 L461.9 58.8 L464.3 58.6 L466.8 59.3 L469.4 59.5 L471.8 59.2 L474.2 58.9 L476.1 58.3 L478.1 57.3 L480.3 56.9 L482.5 57.4 L484.8 57.5 L486.9 56.7 L489.1 56.0 L491.1 55.6 L493.0 55.1 L494.8 55.2 L496.4 56.2 L499.3 57.3 L501.2 57.8 L503.2 58.1 L506.0 58.1 L507.5 57.8 L509.2 57.4 L511.2 57.2 L513.2 56.8 L514.9 55.2 L516.5 53.4 L518.5 52.3 L520.7 51.6 L522.8 50.9 L525.0 50.6 L527.0 50.4 L529.0 49.4 L530.9 48.3 L533.1 48.1 L535.4 48.6 L537.6 48.6 L539.7 48.5 L541.8 48.3 L543.8 47.4 L545.5 46.2 L547.3 45.6 L549.8 45.6 L552.1 45.0 L554.0 43.8 L555.8 42.7 L557.6 41.5 L559.2 40.1 L561.0 39.3 L563.2 39.4 L565.6 39.0 L567.6 37.7 L569.6 36.5 L571.6 35.5 L573.4 34.5 L574.9 33.8 L576.0 33.2 M986.6 33.2 L987.1 34.5 L987.8 36.4 L988.7 38.5 L989.7 40.9 L990.6 43.4 L990.8 45.9 L989.8 47.8 L988.4 49.5 L987.6 51.3 L987.3 53.5 L987.2 55.7 L986.5 57.8 L985.5 59.8 L984.6 61.7 L984.0 63.7 L983.3 65.7 L982.7 67.7 L982.4 69.8 L982.4 72.1 L982.3 74.1 L981.6 76.0 L980.4 77.8 L979.6 79.7 L979.7 81.7 L980.4 83.6 L980.9 85.5 L981.1 87.5 L981.2 89.5 L981.2 91.6 L981.2 93.7 L981.0 95.7 L981.2 97.8 L982.0 99.8 L983.0 101.9 L983.5 104.1 L983.1 106.3 L982.3 108.5 L981.9 110.6 L981.9 112.8 L981.9 115.0 L981.5 117.1 L980.8 119.2 L980.1 121.3 L979.1 123.4 L977.9 125.3 L976.9 127.3 L976.5 129.5 L976.9 131.9 L977.2 134.2 L976.9 136.3 L976.1 138.3 L975.3 140.4 L975.1 142.5 L975.0 144.7 L974.9 146.8 L974.8 149.0 L974.6 151.1 L974.3 153.2 L973.5 155.3 L972.4 157.3 L971.8 159.4 L972.1 161.6 L972.8 163.7 L973.0 165.9 L972.7 168.0 L972.0 170.1 L971.7 172.2 L971.5 174.3 L971.4 176.4 L971.3 178.6 L971.4 180.8 L971.4 183.0 L970.9 185.1 L969.7 187.1 L968.4 189.1 L967.9 191.2 L968.0 193.5 L968.1 196.0 L967.8 198.4 L967.1 200.7 L966.6 203.0 L966.4 205.2 L966.2 207.1 L966.0 208.7 L965.9 209.9 M1021.7 33.2 L1022.0 34.6 L1022.7 36.5 L1023.8 38.7 L1024.7 41.2 L1025.1 43.8 L1025.9 46.2 L1027.2 47.8 L1028.4 49.4 L1029.7 51.0 L1031.4 52.4 L1032.4 54.2 L1032.5 56.5 L1032.5 58.7 L1032.9 60.6 L1033.0 62.5 L1033.1 64.4 L1033.6 66.4 L1034.0 68.5 L1033.5 70.6 L1033.1 72.7 L1033.6 74.8 L1034.5 76.7 L1035.5 78.7 L1037.0 80.4 L1038.5 82.0 L1039.2 84.1 L1039.4 86.4 L1040.0 88.5 L1040.8 90.5 L1041.3 92.6 L1042.1 94.6 L1043.2 96.5 L1043.5 98.6 L1043.1 100.9 L1043.3 103.0 L1044.0 104.9 L1044.7 106.7 L1045.9 108.6 L1047.7 110.1 L1049.0 111.7 L1049.5 113.7 L1050.1 115.6 L1051.1 117.3 L1052.0 119.1 L1052.9 120.9 L1054.4 122.5 L1055.6 124.2 L1055.9 126.3 L1056.0 128.5 L1056.7 130.4 L1057.5 132.3 L1058.2 134.2 L1059.7 135.6 L1061.2 137.0 L1062.0 138.8 L1062.5 140.9 L1063.4 142.8 L1064.6 144.7 L1065.5 146.3 L1067.0 147.8 L1068.7 149.2 L1069.9 151.1 L1070.3 153.4 L1071.0 155.5 L1071.9 157.4 L1072.5 159.3 L1073.5 161.0 L1075.2 162.6 L1076.4 164.3 L1076.8 166.3 L1077.3 168.3 L1078.2 170.0 L1079.1 171.8 L1080.3 173.5 L1082.3 174.8 L1084.2 176.2 L1085.3 178.1 L1086.2 180.3 L1087.4 182.3 L1088.6 184.4 L1089.7 186.4 L1091.3 188.0 L1093.3 189.5 L1094.5 191.5 L1095.4 193.7 L1096.6 195.7 L1097.8 197.5 L1098.9 199.3 L1100.7 201.1 L1102.7 202.8 L1103.9 204.9 L1104.7 207.0 L1105.5 208.7 L1106.1 209.9 M1072.6 33.2 L1072.5 34.4 L1072.5 36.0 L1072.5 37.9 L1072.6 39.9 L1073.3 42.2 L1074.3 44.5 L1074.3 46.8 L1074.1 49.2 L1074.3 51.5 L1074.2 53.6 L1073.9 55.5 L1074.4 57.8 L1075.4 59.9 L1075.9 61.9 L1075.9 64.0 L1076.2 65.9 L1076.3 67.9 L1075.9 69.9 L1076.0 71.7 L1077.2 73.9 L1078.3 75.8 L1079.1 77.8 L1080.1 79.7 L1081.0 81.7 L1080.9 84.1 L1080.6 86.0 L1081.0 87.9 L1081.5 89.9 L1081.6 91.9 L1082.1 93.9 L1082.8 95.9 L1082.6 98.0 L1081.9 100.1 L1081.8 102.1 L1082.0 104.1 L1082.1 106.1 L1082.7 108.0 L1083.9 109.8 L1084.8 111.7 L1085.0 113.8 L1085.4 116.0 L1085.9 118.0 L1086.1 120.2 L1086.5 122.5 L1087.7 124.5 L1089.0 126.6 L1089.5 128.8 L1089.9 131.0 L1090.4 133.1 L1090.2 135.1 L1089.9 137.8 L1090.3 140.0 L1091.2 142.0 L1091.8 143.9 L1092.5 145.9 L1093.5 147.8 L1094.2 149.9 L1094.3 152.3 L1094.9 154.5 L1096.1 156.4 L1097.2 158.5 L1098.3 160.5 L1099.8 162.3 L1101.1 164.2 L1101.4 166.4 L1101.6 168.7 L1102.2 171.0 L1102.5 173.4 L1102.6 175.4 L1103.5 177.2 L1104.6 179.1 L1104.9 181.2 L1104.9 183.4 L1105.2 185.5 L1105.3 187.5 L1105.0 189.3 L1105.3 191.6 L1106.1 193.9 L1106.5 196.2 L1106.4 198.2 L1106.7 200.1 L1106.8 201.7 L1107.1 203.9 L1108.3 206.0 L1110.0 207.6 L1111.5 208.9 L1112.4 209.9 M1201.6 60.3 L1201.2 61.8 L1200.7 63.9 L1199.9 66.3 L1199.3 69.0 L1198.5 71.4 L1197.2 73.3 L1196.4 75.3 L1196.2 77.5 L1195.8 79.7 L1195.5 81.9 L1195.7 84.3 L1195.5 86.4 L1194.3 88.1 L1193.2 89.7 L1192.1 91.5 L1190.5 93.0 L1189.2 94.6 L1188.7 96.8 L1188.3 98.8 L1187.5 100.6 L1186.9 102.6 L1186.4 104.7 L1185.2 106.6 L1184.1 108.5 L1183.8 110.6 L1183.7 112.7 L1183.4 114.7 L1183.7 116.9 L1184.0 119.0 L1183.3 121.0 L1182.4 122.9 L1181.9 124.8 L1181.1 126.7 L1180.1 128.6 L1180.1 130.7 L1180.5 132.7 L1180.3 134.7 L1180.2 136.7 L1180.3 138.7 L1179.8 140.6 L1178.9 142.5 L1178.6 144.5 L1178.6 146.6 L1178.1 148.7 L1177.7 151.0 L1177.6 153.3 L1176.7 155.3 L1175.1 157.0 L1173.9 158.8 L1172.7 160.5 L1171.2 162.1 L1170.2 163.9 L1169.9 165.9 L1169.1 167.8 L1168.1 169.5 L1167.5 171.4 L1166.7 173.4 L1165.4 175.0 L1164.7 177.0 L1164.6 179.2 L1164.3 181.4 L1163.8 183.5 L1163.9 185.7 L1163.5 187.7 L1162.2 189.4 L1160.9 191.5 L1160.1 193.8 L1159.0 195.9 L1158.4 198.0 L1158.6 200.1 L1158.6 202.0 L1158.4 205.3 L1158.5 208.0 L1158.6 209.9 M1201.6 60.3 L1200.4 62.4 L1199.4 65.1 L1199.9 67.7 L1201.0 69.8 M242.3 208.0 L243.5 209.2 L245.2 211.2 L247.4 214.1 L248.4 215.5 L250.3 216.6 L252.4 217.8 L253.2 219.9 L253.9 222.2 L254.8 224.3 L255.5 226.5 L256.6 228.2 L258.3 229.8 L259.2 231.7 L259.3 234.2 L259.9 236.3 L261.0 238.1 L261.9 240.0 L263.2 241.7 L264.4 243.4 L264.5 245.5 L264.4 247.7 L265.4 249.6 L266.8 251.4 L267.9 253.3 L269.1 255.3 L270.0 257.5 L270.0 259.5 L270.6 261.4 L272.3 262.8 L273.8 264.4 L274.5 266.3 L275.3 268.2 L275.9 270.3 L276.3 272.4 L277.6 274.3 L279.5 275.9 L280.4 277.6 L280.6 279.6 L281.2 281.6 L281.9 283.5 L282.6 285.4 L284.1 287.1 L285.4 288.8 L285.5 291.0 L285.5 293.2 L286.2 295.1 L287.0 296.9 L287.9 298.7 L289.1 300.4 L289.7 302.5 L289.5 304.9 L290.0 307.0 L291.4 308.6 L292.6 310.2 L293.7 312.0 L294.8 313.6 L295.4 315.5 L295.9 317.5 L297.5 318.8 L299.8 320.0 L301.4 321.7 L302.8 323.4 L304.2 325.0 L305.4 326.9 L306.8 328.4 L309.1 329.4 L311.0 330.6 L311.9 332.5 L312.9 334.7 L314.2 336.9 L315.2 339.2 L316.4 341.4 L317.7 343.3 L318.4 345.3 L319.0 347.0 L319.6 348.1 M242.3 208.0 L243.3 209.3 L244.8 211.5 L246.7 214.6 L247.5 216.0 L248.5 217.7 L249.1 219.9 L249.4 222.3 L250.2 224.5 L251.7 226.2 L253.5 227.7 L255.0 229.3 L256.6 230.9 L258.2 232.4 L259.6 234.0 L260.5 235.9 L261.7 237.6 L263.6 239.0 L265.6 240.5 L267.0 242.2 L267.8 244.2 L268.4 246.2 L268.9 248.3 L269.1 250.5 L269.3 252.8 L270.2 254.9 L271.4 256.9 L271.9 258.7 L271.8 260.9 L271.5 263.1 L271.8 265.2 L272.3 267.2 L272.9 269.3 L273.8 271.2 L275.2 272.9 L276.4 274.8 L276.9 277.0 L277.2 278.9 L278.1 280.7 L279.7 282.2 L281.1 283.8 L282.5 285.5 L283.9 287.1 L285.2 288.8 L285.9 290.8 L286.1 292.9 L286.9 294.8 L288.4 296.3 L289.7 297.8 L290.5 299.7 L291.1 301.7 L291.8 303.7 L292.2 305.8 L292.4 308.0 L293.0 310.0 L294.3 311.6 L295.7 313.0 L296.5 314.8 L297.0 316.8 L297.6 318.7 L298.7 320.7 L299.9 322.7 L301.3 324.5 L303.1 325.8 L305.2 327.0 L306.6 328.6 L307.5 330.6 L308.4 332.4 L309.9 333.9 L311.6 335.6 L313.3 337.4 L315.0 339.4 L316.5 341.3 L317.6 343.4 L318.3 345.4 L319.0 347.0 L319.6 348.1 M242.9 208.6 L244.0 209.8 L245.4 211.6 L247.2 213.7 L249.2 216.2 L250.4 217.6 L252.2 218.7 L253.9 220.1 L255.0 222.1 L255.7 224.5 L257.0 226.4 L258.8 228.1 L260.5 229.8 L261.6 231.6 L262.4 233.5 L263.1 235.5 L263.5 237.6 L263.8 239.8 L264.8 241.8 L266.5 243.5 L267.9 245.4 L268.6 247.8 L268.9 249.9 L269.7 251.7 L270.9 253.4 L272.3 255.1 L273.7 256.7 L275.3 258.4 L276.6 260.2 L277.3 262.3 L277.8 264.6 L279.1 266.4 L280.9 267.9 L282.5 269.5 L283.3 271.5 L284.0 273.6 L284.7 275.7 L285.5 277.8 L286.4 279.8 L287.6 281.6 L289.3 283.2 L290.5 285.0 L290.9 287.2 L291.2 289.4 L292.2 291.2 L293.7 292.6 L295.3 294.4 L296.5 296.3 L297.8 298.1 L298.8 300.0 L299.3 302.1 L300.0 304.1 L301.3 305.8 L303.0 307.3 L304.1 309.0 L304.4 311.2 L304.5 313.4 L304.9 315.4 L305.5 317.3 L306.0 319.3 L306.8 321.2 L307.7 323.0 L308.2 324.9 L308.0 327.1 L308.1 329.2 L309.1 331.0 L310.9 332.8 L312.5 334.8 L313.7 337.0 L314.8 339.3 L316.0 341.5 L317.0 343.6 L318.1 345.4 L319.1 346.9 L319.6 348.1 M263.9 244.6 L263.0 245.8 L261.8 247.6 L260.6 249.7 L259.4 252.2 L258.1 254.6 L256.4 255.7 L254.5 256.6 L252.9 257.9 L251.5 259.6 L249.9 261.1 L248.5 262.7 L247.2 264.4 L245.7 266.0 L243.6 267.1 L241.6 268.5 L240.3 270.4 L239.4 272.6 L238.2 274.6 L236.8 276.4 L235.4 278.2 L233.9 279.9 L232.0 281.4 L230.4 283.1 L229.5 285.3 L228.9 287.7 L227.8 289.6 L226.3 291.2 L224.9 292.8 L223.5 294.4 L221.8 295.7 L220.4 297.2 L219.5 299.2 L218.6 301.1 L216.6 302.7 L214.3 304.1 L212.3 305.7 L210.5 307.3 L209.1 308.8 L208.2 309.9 M319.6 348.1 L319.3 349.5 L318.8 351.3 L318.5 353.7 L318.0 356.4 L316.7 359.3 L315.3 360.8 L314.8 362.9 L314.8 365.3 L314.4 367.8 L313.7 370.3 L313.2 372.7 L312.6 374.9 L312.0 376.9 L311.9 378.6 L311.7 379.9 M319.6 348.1 L319.9 349.5 L320.1 351.4 L320.4 353.6 L321.2 356.0 L322.3 358.4 L323.0 360.9 L323.7 363.3 L324.1 365.5 L323.4 368.0 L322.5 370.3 L322.2 372.7 L321.7 374.9 L321.4 376.9 L321.4 378.7 L321.2 379.9 M319.6 348.1 L320.4 349.2 L321.7 350.5 L323.2 352.0 L324.4 354.0 L325.3 356.5 L326.1 358.9 L327.5 360.8 L328.9 362.6 L329.8 364.6 L330.4 367.0 L330.9 369.6 L331.1 372.1 L331.4 374.5 L331.8 376.7 L332.2 378.6 L332.4 379.9 M319.6 348.1 L320.7 348.8 L321.9 349.9 L323.4 351.2 L324.7 353.0 L326.4 354.7 L328.6 355.8 L330.8 357.2 L332.4 359.2 L333.5 360.7 L334.7 362.3 L335.5 364.4 L336.6 366.5 L338.6 368.1 L340.5 369.8 L341.4 371.9 L342.3 373.9 L343.1 375.8 L343.7 377.6 L344.4 379.0 L345.1 379.9 M408.8 200.0 L409.3 201.1 L410.2 202.5 L411.5 204.0 L412.8 205.8 L413.9 207.9 L414.7 210.3 L415.4 212.7 L415.8 214.4 L416.1 216.3 L416.9 218.2 L418.0 220.0 L418.9 221.9 L419.1 224.1 L418.8 226.4 L419.0 228.5 L420.0 230.3 L421.2 232.0 L422.3 234.0 L423.2 236.0 L424.0 237.9 L424.7 239.8 L425.2 241.8 L425.9 243.8 L427.1 245.7 L428.8 247.5 L429.9 249.1 L430.1 251.1 L430.0 253.3 L430.3 255.4 L431.1 257.3 L431.9 259.3 L432.6 261.2 L433.4 263.1 L434.0 265.0 L434.3 266.9 L434.3 269.3 L434.6 271.6 L435.8 273.4 L437.4 275.1 L438.5 276.9 L439.1 278.9 L439.5 281.0 L440.2 283.0 L441.1 284.9 L442.0 286.9 L443.1 288.8 L444.5 290.6 L445.7 292.4 L446.2 294.5 L446.2 296.8 L446.7 298.9 L448.0 300.7 L449.6 302.5 L450.8 304.5 L451.7 306.7 L452.6 308.8 L453.4 310.6 L454.3 312.0 L455.0 313.1 M455.0 313.1 L455.2 314.3 L455.5 315.9 L455.8 317.8 L456.2 319.9 L457.2 322.0 L458.4 324.1 L458.7 326.4 L458.9 328.7 L459.5 330.7 L460.0 332.7 L460.6 334.8 L461.8 336.6 L463.2 338.3 L463.6 340.3 L463.7 342.4 L464.2 344.4 L464.6 346.5 L465.0 348.7 L466.2 350.7 L467.9 352.5 L468.9 354.6 L469.6 357.0 L470.4 359.0 L471.0 361.1 L471.4 363.0 L472.8 365.3 L474.7 366.9 L476.0 368.5 L476.8 370.2 L477.4 371.9 L477.9 375.0 L477.9 377.9 L477.9 379.9 M967.5 196.8 L967.6 198.0 L967.5 199.6 L967.0 201.4 L966.8 203.4 L967.0 205.6 L967.1 208.0 L966.7 210.3 L966.6 212.7 L966.3 215.0 L965.4 217.1 L964.6 219.0 L964.7 221.3 L965.2 223.5 L965.4 225.7 L965.6 227.8 L965.9 230.0 L965.8 232.0 L965.0 234.1 L964.3 236.1 L964.3 238.2 L964.5 240.4 L964.3 242.5 L964.3 244.6 L964.3 246.8 L963.8 248.8 L962.6 250.9 L962.0 253.0 L962.0 255.1 L962.1 257.2 L962.0 259.4 L962.3 261.6 L962.6 263.8 L962.1 265.9 L961.1 267.9 L960.5 270.0 L960.4 272.2 L960.1 274.3 L959.9 276.5 L960.0 278.7 L959.8 280.8 L958.8 282.7 L957.5 284.6 L956.9 286.7 L956.5 288.8 L956.1 290.9 L956.0 293.2 L956.5 295.6 L956.7 297.5 L956.1 299.5 L955.4 301.5 L955.3 303.7 L955.2 305.8 L954.9 307.9 L955.1 310.1 L955.6 312.3 L955.4 314.3 L954.5 316.1 L953.7 317.8 L953.1 320.1 L952.4 322.2 L951.9 324.1 L952.2 326.1 L952.7 328.1 L952.4 330.0 L951.8 331.8 L951.4 333.7 L951.1 335.7 L950.4 337.5 L950.1 339.4 L950.5 341.4 L950.8 343.5 L950.2 345.5 L949.4 347.5 L948.8 349.7 L948.0 351.5 L947.1 353.3 L946.7 355.3 L947.1 357.4 L947.4 359.6 L947.0 361.7 L946.6 363.8 L946.5 365.9 L946.0 368.0 L945.5 370.0 L945.7 371.9 L946.5 374.4 L946.9 376.8 L946.8 379.3 L946.5 381.8 L946.2 384.1 L945.6 386.2 L945.4 388.2 L945.5 389.8 L945.5 391.1 M1143.6 250.3 L1143.1 251.7 L1142.3 253.8 L1141.8 256.2 L1141.2 258.8 L1139.9 261.2 L1138.6 263.3 L1138.3 265.7 L1138.4 268.2 L1138.3 270.5 L1138.5 272.8 L1138.4 274.9 L1137.6 277.6 L1136.9 280.3 L1136.6 282.7 L1136.3 284.4 M1143.6 250.3 L1143.2 251.8 L1142.8 253.9 L1142.7 256.4 L1142.3 259.1 L1141.5 261.6 L1140.8 263.8 L1140.9 266.3 L1141.0 268.8 L1140.4 271.0 L1139.3 273.0 L1138.4 274.9 L1137.4 277.6 L1136.7 280.3 L1136.4 282.7 L1136.3 284.4 M1143.6 250.3 L1143.5 251.9 L1143.0 253.9 L1142.1 256.3 L1141.5 258.9 L1141.1 261.5 L1140.6 263.7 L1139.5 266.0 L1138.6 268.2 L1137.8 270.4 L1137.2 272.5 L1136.8 274.6 L1136.8 277.5 L1136.9 280.3 L1136.6 282.7 L1136.3 284.4 M1099.7 200.0 L1100.3 201.1 L1101.4 202.5 L1102.6 204.2 L1103.9 206.1 L1105.4 208.0 L1106.3 210.3 L1106.9 212.7 L1108.0 214.5 L1109.4 215.8 L1110.8 218.1 L1111.9 220.2 L1113.2 221.8 L1114.4 223.5 L1115.2 225.8 L1116.1 227.9 L1117.8 229.5 L1119.7 230.9 L1121.6 232.4 L1123.6 233.6 L1125.7 234.3 L1127.8 235.5 L1129.4 237.1 L1131.1 238.6 L1132.9 239.9 L1134.7 241.4 L1136.1 243.1 L1138.0 244.6 L1139.9 246.1 L1141.4 247.8 L1142.6 249.3 L1143.6 250.3 M1106.1 200.0 L1106.9 201.2 L1108.0 202.8 L1109.6 204.6 L1111.4 206.5 L1112.9 208.7 L1114.2 210.9 L1115.5 212.8 L1116.5 214.8 L1117.1 217.0 L1118.1 218.9 L1119.6 220.5 L1121.0 222.1 L1121.8 223.8 L1122.6 225.5 L1122.9 227.9 L1121.8 230.1 L1120.1 231.6 L1118.8 233.2 L1118.8 235.0 L1119.4 236.8 L1120.5 238.7 L1122.3 240.3 L1124.6 241.5 L1126.6 242.9 L1128.3 244.7 L1130.0 246.0 L1132.0 247.1 L1134.0 248.3 L1136.1 249.4 L1138.2 249.9 L1139.9 250.4 L1141.1 251.0 M1158.6 200.0 L1158.5 201.4 L1158.4 203.3 L1158.3 205.6 L1157.8 208.0 L1157.3 210.4 L1157.0 212.7 L1156.9 215.0 L1156.4 217.3 L1155.2 219.3 L1153.7 221.1 L1152.5 223.1 L1151.5 225.2 L1150.5 227.3 L1149.6 229.3 L1149.0 231.6 L1149.0 234.0 L1148.9 236.4 L1148.4 238.5 L1147.3 240.6 L1146.4 242.8 L1145.7 245.1 L1145.1 247.2 L1144.6 249.0 L1144.3 250.3 M1144.3 250.3 L1145.9 250.6 L1148.2 251.1 L1151.1 251.3 L1154.1 251.9 L1155.7 252.7 L1157.5 253.6 L1159.2 254.8 L1160.7 256.5 L1162.3 258.2 L1164.3 258.9 L1166.3 259.4 L1168.5 260.3 L1170.8 260.8 L1173.1 261.2 L1175.1 262.2 L1177.1 263.5 L1179.2 264.0 L1181.4 264.3 L1183.6 264.7 L1185.9 264.6 L1188.1 264.0 L1190.1 264.2 L1192.0 264.8 L1194.8 264.9 L1197.6 264.6 L1200.0 264.2 L1201.6 263.7 M1137.9 284.4 L1139.1 284.0 L1140.6 283.6 L1142.3 282.7 L1144.1 281.4 L1146.2 280.4 L1148.5 279.8 L1150.8 279.4 L1153.2 279.3 L1155.4 279.3 L1157.1 278.6 L1159.4 277.5 L1161.8 277.5 L1164.0 278.1 L1166.2 278.4 L1168.4 278.6 L1170.7 278.7 L1172.9 278.1 L1174.9 276.9 L1176.9 276.6 L1179.0 277.1 L1181.1 277.4 L1183.1 277.2 L1185.1 277.0 L1187.0 276.7 L1188.8 275.9 L1191.2 275.6 L1193.9 275.7 L1196.4 275.3 L1198.5 274.4 L1200.3 273.7 L1201.6 273.2 M1137.9 284.4 L1141.1 285.3 L1142.4 285.9 L1144.1 286.2 L1146.1 286.5 L1148.3 287.0 L1150.5 287.6 L1152.7 288.4 L1154.7 289.6 L1156.7 290.4 L1158.9 290.2 L1161.2 290.0 L1163.2 290.8 L1165.1 292.1 L1167.1 292.8 L1169.2 293.2 L1171.1 293.4 L1173.0 293.1 L1175.1 292.6 L1177.1 292.8 L1179.4 293.3 L1181.4 292.9 L1183.4 292.0 L1185.7 292.0 L1187.6 292.9 L1189.7 294.1 L1191.8 295.5 L1194.0 296.9 L1196.4 297.9 L1198.7 298.6 L1200.4 299.6 L1201.6 300.3 M1136.3 286.0 L1135.9 287.2 L1135.5 288.9 L1134.9 290.9 L1133.7 292.9 L1132.2 294.9 L1131.0 297.1 L1130.2 299.5 L1129.5 301.8 L1129.0 303.8 L1128.7 306.0 L1128.5 308.2 L1127.7 310.3 L1126.5 312.4 L1125.6 314.5 L1125.5 316.7 L1125.7 319.0 L1125.6 321.1 L1124.9 323.3 L1124.2 325.5 L1123.4 327.5 L1122.3 329.3 L1121.0 331.0 L1120.1 333.0 L1119.9 335.1 L1119.8 337.3 L1119.0 339.3 L1117.8 341.1 L1116.5 343.0 L1115.5 345.0 L1114.6 346.9 L1113.8 348.9 L1113.6 350.9 L1113.9 352.9 L1114.4 355.1 L1114.4 357.3 L1114.4 359.5 L1114.6 361.5 L1115.2 363.4 L1115.4 365.6 L1115.1 367.4 L1114.5 369.6 L1113.7 371.9 L1112.3 373.9 L1110.7 375.7 L1109.2 377.3 L1108.3 378.8 L1107.6 379.9 M1115.6 225.5 L1115.5 226.7 L1115.5 228.4 L1115.7 230.4 L1115.9 232.7 L1116.2 235.0 L1116.3 237.3 L1116.2 239.6 L1116.3 241.7 L1117.4 243.5 L1119.1 245.0 L1120.5 246.4 L1121.1 248.3 L1121.5 250.4 L1122.4 252.3 L1123.8 254.0 L1125.1 255.7 L1126.3 257.6 L1127.3 259.6 L1128.2 261.8 L1128.8 264.2 L1129.3 266.5 L1130.2 268.5 L1131.5 270.1 L1132.8 272.4 L1133.1 275.0 L1133.2 277.5 L1133.6 279.7 L1134.3 281.5 L1134.7 282.8 M316.0 351.4 L315.8 352.7 L315.8 354.4 L316.0 356.3 L315.9 358.5 L315.5 360.8 L315.2 363.3 L314.5 365.7 L313.4 368.1 L312.4 370.4 L312.1 372.7 L312.1 374.9 L311.7 377.0 L311.2 379.2 L311.0 381.4 L310.5 383.5 L309.3 385.3 L308.1 387.1 L307.5 389.1 L307.0 391.2 L306.4 393.1 L306.0 395.2 L306.3 397.4 L306.4 399.4 L305.8 401.2 L305.0 403.0 L304.5 404.9 L303.9 406.8 L302.9 408.7 L302.2 410.8 L302.3 413.0 L302.4 415.3 L302.0 417.2 L301.7 419.2 L301.7 421.2 L301.3 423.3 L300.4 425.3 L299.6 427.4 L299.6 429.6 L299.5 431.9 L299.2 434.0 L299.2 436.3 L299.5 438.5 L299.3 440.6 L298.4 442.5 L297.4 444.5 L296.7 446.5 L295.8 448.4 L294.7 450.2 L294.1 452.1 L294.1 454.2 L293.8 456.2 L293.1 458.1 L292.4 460.0 L291.9 462.0 L291.1 463.8 L289.9 465.6 L289.2 467.5 L289.2 469.7 L289.1 471.8 L288.8 473.9 L288.7 476.0 L288.8 478.2 L288.2 480.2 L287.0 482.0 L286.0 483.8 L285.4 485.7 L284.5 487.5 L283.5 489.2 L282.9 491.5 L282.7 493.8 L282.0 496.1 L280.8 498.0 L279.7 500.0 L278.9 502.1 L277.6 503.9 L276.3 505.5 L275.5 507.4 L275.4 509.4 L274.6 512.0 L273.5 514.3 L272.6 516.7 L271.7 518.9 L270.1 520.5 L268.4 521.7 L267.2 523.0 L264.9 525.6 L262.9 527.1 L261.5 528.1 M321.1 351.4 L321.0 352.7 L321.2 354.3 L321.6 356.2 L321.8 358.4 L321.9 360.7 L322.0 363.2 L321.8 365.7 L322.0 368.2 L322.8 370.6 L323.3 372.9 L322.7 375.0 L321.6 377.1 L321.3 379.2 L321.5 381.2 L321.6 383.1 L321.6 385.1 L321.6 387.0 L321.2 389.0 L320.4 390.9 L320.2 393.0 L321.0 395.2 L321.8 397.3 L321.6 399.3 L320.9 401.4 L320.5 403.5 L320.3 405.7 L320.2 407.9 L320.4 410.1 L320.7 412.3 L320.1 414.4 L318.9 416.6 L318.3 418.7 L318.8 420.9 L319.4 423.0 L319.6 425.2 L319.7 427.3 L319.8 429.5 L319.6 431.7 L319.8 433.8 L320.7 435.9 L321.9 437.9 L322.1 440.1 L321.4 442.3 L321.0 444.4 L321.1 446.6 L321.2 448.7 L321.2 450.9 L321.2 453.1 L320.7 455.2 L319.5 457.2 L318.6 459.3 L318.8 461.5 L319.5 463.7 L319.5 465.9 L319.0 468.0 L318.7 470.1 L318.7 472.2 L318.6 474.3 L319.1 476.4 L320.0 478.5 L320.2 480.6 L319.4 482.7 L318.6 484.9 L318.8 487.1 L319.2 489.4 L319.2 491.4 L318.9 493.4 L318.6 495.4 L317.8 497.4 L317.0 499.4 L317.1 501.5 L318.0 503.7 L318.3 505.8 L317.7 507.9 L317.2 510.0 L317.3 512.1 L317.6 514.2 L318.0 516.3 L318.7 518.4 L319.1 520.5 L318.6 522.6 L317.8 524.8 L318.0 526.9 L318.9 529.0 L319.3 531.1 L319.0 533.2 L318.7 535.4 L318.4 537.4 L318.2 539.4 L318.4 541.4 L319.3 543.2 L319.9 545.7 L319.5 548.3 L318.8 550.8 L318.8 553.4 L319.3 555.9 L319.5 558.2 L319.4 560.3 L319.2 562.2 L318.9 563.8 L318.7 565.1 M321.1 349.8 L321.4 350.9 L321.9 352.4 L322.9 353.9 L323.7 355.8 L323.9 358.0 L324.3 360.4 L325.2 362.6 L326.1 364.8 L327.6 366.9 L329.3 368.8 L330.0 371.0 L330.1 373.3 L330.7 375.2 L332.1 377.2 L333.3 379.2 L334.6 381.1 L335.9 382.9 L336.3 385.1 L336.2 387.4 L337.1 389.4 L338.5 391.1 L339.4 393.0 L340.1 395.0 L340.7 397.1 L340.7 399.3 L340.5 401.6 L341.5 403.5 L342.8 405.3 L343.5 407.3 L343.8 409.4 L344.4 411.5 L344.7 413.7 L345.3 415.8 L346.8 417.3 L348.5 418.8 L349.3 420.7 L349.8 422.7 L350.7 424.6 L351.6 426.4 L352.6 428.2 L354.3 429.7 L355.8 431.2 L356.2 433.4 L356.4 435.6 L357.2 437.4 L358.2 439.2 L359.1 441.0 L360.4 442.7 L361.3 444.5 L361.3 446.8 L361.5 448.9 L362.7 450.6 L364.1 452.3 L365.2 454.0 L366.5 455.7 L367.5 457.5 L367.8 459.6 L368.7 461.5 L370.6 462.7 L372.3 464.1 L373.5 465.7 L374.7 467.4 L375.7 469.2 L376.4 471.2 L377.6 472.9 L379.5 473.9 L381.0 475.2 L381.9 477.3 L382.9 479.3 L384.0 481.3 L385.0 483.2 L386.4 484.8 L388.4 485.9 L389.8 487.5 L390.4 489.7 L391.4 491.7 L392.7 493.3 L394.1 495.0 L395.9 496.5 L397.9 497.8 L399.2 499.7 L400.0 502.0 L401.3 503.8 L403.1 505.2 L404.7 506.5 L406.2 507.8 L407.7 508.9 L409.1 511.4 L410.3 513.9 L411.9 515.7 L413.5 517.2 L414.5 518.6 L415.3 519.7 M322.1 349.8 L322.8 350.8 L323.5 352.0 L324.1 353.8 L324.6 355.7 L325.6 357.6 L326.8 359.6 L328.3 361.5 L329.9 363.4 L331.3 365.4 L332.2 367.6 L332.9 369.9 L334.1 371.7 L335.9 373.0 L337.4 374.3 L338.4 376.7 L338.8 379.3 L339.6 381.4 L340.8 383.2 L342.0 384.9 L343.1 386.6 L344.3 388.3 L345.2 390.1 L345.6 392.2 L346.3 394.3 L347.7 395.8 L349.6 397.1 L351.0 398.7 L351.6 400.7 L352.0 402.8 L352.9 404.7 L354.1 406.5 L355.3 408.4 L356.2 410.3 L357.0 412.2 L357.4 414.4 L357.4 416.7 L357.7 419.0 L359.0 420.8 L360.7 422.6 L361.6 424.7 L361.8 427.0 L362.4 429.2 L363.5 430.9 L364.9 432.5 L366.2 434.1 L367.4 435.8 L368.5 437.6 L369.0 439.6 L369.3 441.8 L370.1 443.7 L371.7 445.2 L373.1 446.8 L373.5 448.9 L373.5 451.2 L374.0 453.2 L375.1 454.9 L376.4 456.6 L377.5 458.3 L378.7 460.0 L379.6 461.8 L380.2 463.8 L380.9 465.8 L382.3 467.4 L384.2 468.7 L385.5 470.2 L386.1 472.2 L386.4 474.4 L387.3 476.3 L388.7 477.9 L390.1 479.5 L391.2 481.2 L392.4 483.0 L393.3 484.8 L393.9 486.8 L394.8 488.5 L396.4 489.7 L398.6 491.1 L400.0 493.0 L400.7 495.2 L401.4 497.4 L402.7 499.2 L404.2 500.7 L405.5 502.4 L406.5 504.1 L407.4 505.9 L408.2 508.4 L409.1 511.1 L410.5 513.3 L412.2 515.1 L413.6 516.9 L414.6 518.5 L415.3 519.7 M322.8 349.8 L323.5 350.7 L324.5 351.9 L325.3 353.4 L326.4 355.1 L328.0 356.6 L329.7 358.2 L331.0 360.2 L332.7 362.0 L334.2 364.0 L334.9 366.5 L335.8 368.9 L337.1 370.7 L338.2 372.6 L339.3 374.3 L340.9 375.3 L343.2 377.1 L344.7 379.1 L346.1 381.0 L347.5 382.4 L348.6 384.1 L349.6 385.9 L351.3 387.1 L353.3 388.2 L354.9 389.6 L356.6 390.8 L358.5 392.0 L359.8 393.7 L360.8 395.8 L362.1 397.5 L363.5 399.1 L364.7 400.9 L366.1 402.3 L368.0 403.5 L369.4 405.1 L370.3 407.1 L371.5 408.8 L372.5 410.6 L373.2 412.6 L374.4 414.4 L376.2 415.7 L378.0 417.2 L379.7 418.8 L381.8 420.1 L383.7 421.7 L384.8 423.9 L386.0 425.8 L387.4 427.3 L388.3 428.9 L389.7 431.0 L391.1 432.0 L392.4 433.1 L393.8 435.2 L394.7 436.6 L395.9 438.1 L396.8 440.1 L397.9 442.2 L399.7 443.7 L401.6 445.0 L403.4 446.5 L405.3 447.7 L407.3 448.6 L408.8 450.1 L410.1 451.9 L411.7 453.2 L413.4 454.4 L414.9 455.8 L416.8 456.7 L419.0 457.2 L420.9 458.2 L422.5 459.4 L424.2 460.4 L425.9 461.7 L427.3 463.5 L429.1 464.7 L431.1 465.3 L433.1 466.2 L435.0 467.1 L437.2 467.4 L439.3 468.2 L441.3 469.8 L443.4 471.2 L445.8 472.1 L448.0 473.2 L450.2 474.1 L452.2 474.6 L453.9 475.2 L455.0 475.9 M208.4 455.8 L208.7 456.9 L209.3 458.4 L210.1 460.0 L211.2 461.7 L212.0 463.8 L212.6 466.1 L213.9 468.1 L215.5 470.0 L217.0 471.8 L218.3 473.6 L219.7 475.1 L221.2 476.7 L222.2 478.5 L222.9 480.6 L223.9 482.5 L225.3 484.0 L226.8 485.6 L228.1 487.3 L229.8 488.7 L231.8 490.0 L233.3 491.8 L233.9 493.7 L234.7 495.7 L235.8 497.5 L236.8 499.5 L237.6 501.5 L238.8 503.3 L240.4 504.9 L241.7 506.5 L242.3 508.5 L242.8 510.5 L243.6 512.2 L244.2 513.9 L245.3 516.5 L246.7 518.5 L248.7 519.8 L250.6 520.7 L252.3 521.6 L253.7 522.6 L255.2 523.4 L257.8 525.5 L260.0 527.1 L261.5 528.1 M208.4 455.8 L209.1 456.8 L209.6 458.2 L210.3 459.9 L211.6 461.6 L213.1 463.3 L214.3 465.3 L215.0 467.6 L215.8 469.8 L216.7 472.0 L217.6 474.1 L218.7 475.8 L220.3 477.3 L221.8 478.8 L222.7 480.8 L223.2 483.1 L224.0 485.2 L225.4 486.8 L227.1 488.1 L228.5 489.8 L229.5 491.8 L230.6 493.7 L231.4 495.5 L232.3 497.4 L233.5 499.0 L235.4 500.4 L237.4 501.6 L238.9 503.3 L239.7 505.3 L240.7 507.1 L242.3 508.5 L244.1 509.6 L245.6 510.7 L246.8 511.8 L248.5 513.7 L249.9 515.5 L250.9 517.4 L252.1 519.1 L253.5 520.2 L255.0 521.1 L256.0 522.4 L258.2 525.1 L260.1 527.0 L261.5 528.1 M208.4 455.8 L208.8 456.9 L209.3 458.3 L210.1 460.0 L210.9 461.9 L211.5 464.0 L212.0 466.4 L212.7 468.7 L213.2 471.2 L213.9 473.5 L215.4 475.3 L217.4 476.6 L219.2 478.1 L220.4 479.9 L221.5 481.7 L223.1 483.2 L224.9 484.4 L226.7 485.7 L228.6 486.9 L230.6 488.1 L232.3 489.6 L233.3 491.7 L233.9 493.8 L234.9 495.6 L236.6 497.0 L238.0 498.7 L239.0 500.6 L239.7 502.7 L240.4 504.8 L241.0 506.9 L241.6 509.0 L242.6 510.6 L244.1 511.8 L245.5 512.9 L246.8 515.2 L247.8 517.5 L249.1 519.4 L250.7 520.6 L252.4 521.5 L253.9 522.4 L255.3 523.2 L258.0 525.3 L260.1 527.0 L261.5 528.1 M261.5 528.1 L261.7 529.5 L262.2 531.5 L262.9 533.9 L263.8 536.5 L264.3 538.2 L264.8 540.0 L266.0 541.7 L267.7 543.3 L269.0 545.1 L269.3 547.4 L269.5 549.7 L270.2 551.7 L271.4 553.8 L272.6 556.0 L273.9 558.1 L275.1 560.2 L276.0 562.2 L276.7 563.9 L277.3 565.1 M261.5 528.1 L262.2 529.4 L262.8 531.4 L263.2 533.8 L263.4 536.7 L263.6 538.4 L264.2 540.2 L265.0 542.1 L265.7 544.1 L266.4 546.2 L267.4 548.2 L268.3 550.3 L268.8 552.4 L269.6 554.7 L271.2 556.8 L273.1 558.6 L274.7 560.4 L275.9 562.3 L276.7 563.9 L277.3 565.1 M208.4 523.0 L209.7 522.9 L211.4 522.8 L213.6 522.8 L215.8 522.6 L218.2 521.9 L220.6 521.4 L223.0 521.1 L225.2 521.0 L227.2 521.1 L229.1 521.8 L230.8 523.1 L232.4 524.4 L234.4 525.2 L236.5 525.6 L238.5 526.1 L240.3 526.9 L242.1 527.5 L244.2 527.9 L246.4 528.5 L248.7 529.5 L251.1 530.0 L253.5 529.8 L255.7 529.3 L257.6 529.1 L259.3 529.1 L260.5 529.1 M208.4 539.9 L209.6 539.4 L211.3 539.0 L213.2 538.6 L215.5 538.3 L218.0 538.2 L220.5 538.4 L223.0 537.9 L225.2 536.7 L227.1 535.9 L229.1 535.8 L231.2 535.9 L233.4 535.7 L235.5 535.4 L237.6 535.2 L239.7 534.6 L241.5 533.4 L243.3 532.3 L245.2 532.0 L247.8 532.1 L250.5 532.0 L253.0 531.4 L255.4 531.0 L257.4 530.5 L259.2 530.0 L260.5 529.8 M416.3 521.4 L417.7 521.6 L419.7 522.1 L422.0 522.5 L424.6 522.6 L427.1 522.7 L429.1 522.8 L431.3 522.4 L433.5 522.2 L435.9 522.6 L438.3 523.3 L440.6 523.5 L442.7 523.2 L445.1 522.8 L447.5 522.5 L449.8 521.9 L451.9 521.4 L453.7 521.3 L455.0 521.4 M416.3 522.4 L417.5 523.0 L419.1 524.0 L421.2 525.0 L423.7 526.4 L425.1 527.7 L427.0 528.6 L429.2 529.0 L431.5 529.6 L433.9 529.8 L436.4 529.4 L438.6 529.4 L440.6 530.0 L442.9 530.3 L445.2 530.3 L447.7 530.5 L449.9 530.4 L452.0 530.0 L453.7 529.8 L455.0 529.8 M416.3 521.4 L415.8 522.7 L415.1 524.7 L414.7 527.1 L413.8 529.9 L412.7 531.3 L411.4 532.9 L410.4 534.8 L409.3 536.8 L408.6 538.9 L408.4 541.4 L407.5 543.6 L405.9 545.0 L404.4 546.6 L403.2 548.5 L401.8 550.3 L400.8 552.2 L400.1 554.4 L398.9 556.0 L397.0 556.9 L395.0 558.8 L393.5 560.8 L392.0 562.5 L390.9 564.0 L390.1 565.1 M416.3 521.4 L416.5 522.6 L417.0 524.2 L417.4 526.1 L418.2 528.2 L419.3 530.6 L419.4 533.4 L418.9 536.5 L418.7 538.2 L418.2 540.1 L417.7 542.2 L418.1 544.5 L418.6 546.9 L418.4 549.3 L418.2 551.7 L418.1 554.1 L417.5 556.4 L417.2 558.6 L417.5 560.6 L417.8 562.4 L417.7 563.9 L417.7 565.1 M416.3 521.4 L416.8 522.6 L417.7 524.2 L419.1 526.0 L420.6 528.0 L421.6 530.4 L422.2 533.1 L422.5 534.9 L423.0 536.8 L423.5 538.7 L424.3 540.6 L425.5 542.3 L426.6 544.2 L427.0 546.3 L427.2 548.5 L427.9 550.4 L429.6 552.1 L431.4 554.0 L432.7 556.1 L433.9 558.3 L435.0 560.4 L435.8 562.3 L436.5 564.0 L437.2 565.1 M417.7 521.4 L418.0 522.5 L418.6 523.9 L419.6 525.4 L421.0 527.0 L422.1 528.9 L423.5 531.0 L424.8 533.4 L425.7 536.3 L425.9 538.1 L426.8 539.8 L428.1 541.4 L429.2 543.3 L430.2 545.4 L431.4 547.4 L432.4 549.6 L432.9 552.1 L433.5 554.4 L434.8 556.3 L436.3 558.0 L437.5 559.7 L438.7 561.2 L439.6 562.6 L440.2 564.0 L440.5 565.1 M383.3 565.1 L384.8 564.6 L386.7 563.9 L389.0 562.9 L391.3 561.6 L393.5 560.1 L394.9 558.8 L396.8 557.5 L398.7 556.0 L400.2 554.1 L401.3 552.2 L402.5 550.8 L403.5 550.0 M475.9 375.0 L476.2 376.3 L476.7 378.0 L477.3 380.0 L477.8 382.3 L478.6 384.8 L480.0 387.0 L481.8 389.2 L482.9 391.4 L483.4 393.4 L484.2 395.4 L484.9 397.4 L485.2 399.6 L485.6 401.9 L486.6 403.9 L488.0 405.8 L489.0 407.8 L489.6 410.0 L490.3 412.0 L491.0 414.1 L491.2 416.2 L491.3 418.4 L491.9 420.4 L493.3 422.2 L494.5 424.1 L495.3 426.0 L496.3 427.9 L497.4 429.8 L497.9 431.9 L498.0 434.2 L498.4 436.4 L499.5 438.4 L500.5 440.4 L501.4 442.5 L502.3 444.5 L503.5 446.4 L504.2 448.4 L504.3 450.7 L504.5 452.8 L505.3 454.8 L506.4 456.7 L507.3 458.6 L508.4 460.4 L509.9 462.0 L511.1 463.6 L511.6 465.5 L511.8 467.4 L512.3 469.2 L513.2 471.3 L513.8 473.5 L514.5 475.6 L515.6 477.4 L516.8 479.1 L517.2 480.9 L517.2 482.7 L518.1 485.5 L519.0 487.5 L519.7 489.8 L520.1 491.6 L521.2 493.4 L522.7 495.3 L523.8 497.2 L524.3 499.4 L525.0 501.6 L525.7 503.9 L526.3 506.3 L526.8 508.2 L527.3 509.6 M455.0 474.3 L456.4 474.5 L458.1 474.8 L460.1 475.6 L462.3 476.7 L464.6 477.6 L467.2 478.0 L469.7 478.4 L471.8 479.2 L473.8 480.3 L475.9 481.1 L477.9 482.0 L480.0 482.7 L482.2 483.0 L484.5 482.8 L486.8 482.7 L488.9 483.4 L490.8 484.8 L492.8 485.9 L495.0 486.2 L497.3 486.2 L499.5 486.7 L501.5 487.6 L503.4 488.5 L505.4 489.3 L507.7 490.0 L510.3 490.3 L512.8 490.0 L515.3 489.6 L517.5 489.6 L519.3 489.9 L520.6 490.1 M520.6 490.1 L519.5 490.8 L518.0 491.6 L516.2 492.5 L514.0 493.2 L511.5 493.8 L509.4 495.1 L507.5 496.8 L505.4 497.7 L503.6 498.6 L501.8 499.6 L499.6 499.9 L497.5 500.6 L495.9 502.2 L494.3 503.7 L492.5 504.8 L491.0 506.2 L489.2 507.2 L486.9 507.5 L485.0 508.4 L483.5 509.8 L481.9 511.0 L480.5 512.5 L479.2 514.2 L477.2 515.2 L474.8 515.7 L473.0 516.5 L470.9 517.5 L468.7 518.5 L466.6 520.2 L464.5 521.9 L462.2 522.6 L459.9 523.1 L457.9 523.8 L456.2 524.2 L455.0 524.7 M528.4 510.3 L527.2 511.2 L525.6 512.5 L523.7 513.9 L521.2 515.0 L518.8 516.1 L517.3 517.4 L515.7 518.6 L513.8 519.6 L512.1 520.9 L510.0 521.7 L507.5 521.7 L505.1 522.2 L503.4 523.1 L501.6 523.8 L499.8 524.9 L498.3 526.5 L496.4 527.4 L494.3 527.6 L492.3 528.2 L490.4 528.9 L488.5 529.2 L486.5 530.0 L484.5 531.4 L482.4 531.9 L480.3 531.6 L478.2 531.6 L476.1 531.4 L473.9 530.8 L471.8 531.2 L469.7 532.2 L467.3 532.7 L464.8 532.9 L462.4 533.4 L460.0 533.6 L457.9 533.8 L456.3 534.4 L455.0 534.8 M527.3 511.3 L527.2 512.7 L526.8 514.5 L526.0 516.6 L525.4 519.0 L525.2 521.5 L525.0 524.1 L524.3 526.5 L523.4 528.4 L522.5 530.3 L521.5 532.2 L520.5 534.1 L519.9 536.2 L519.8 538.5 L519.9 541.0 L519.3 543.3 L518.3 545.1 L517.2 547.0 L516.8 549.3 L517.0 551.8 L517.1 554.2 L516.6 556.5 L515.9 558.7 L515.2 560.7 L514.6 562.4 L514.1 563.9 L513.9 565.1 M528.4 511.3 L528.4 512.6 L528.3 514.3 L528.6 516.3 L529.2 518.5 L529.7 521.0 L529.8 523.6 L529.7 526.4 L529.6 528.2 L529.1 530.3 L528.7 532.5 L529.0 534.8 L529.8 537.0 L530.2 539.3 L530.0 541.7 L529.9 543.9 L529.9 546.1 L529.7 548.2 L529.5 550.1 L530.0 552.8 L531.2 555.4 L531.9 557.8 L532.1 560.1 L532.2 562.1 L532.3 563.8 L532.4 565.1 M529.0 511.3 L529.4 512.4 L529.9 514.0 L530.5 515.8 L530.9 518.1 L531.3 520.6 L532.5 523.0 L533.6 524.5 L534.2 526.3 L534.8 528.2 L535.6 530.2 L535.7 532.4 L535.4 534.9 L535.9 537.1 L536.9 539.2 L537.5 541.4 L538.6 543.4 L540.0 545.2 L541.1 547.3 L541.5 549.7 L542.2 552.1 L543.2 554.3 L543.9 556.6 L544.8 558.8 L546.0 560.6 L546.8 562.3 L547.2 563.9 L547.5 565.1 M529.7 511.3 L530.3 512.5 L531.1 514.1 L532.2 516.5 L534.0 519.7 L535.0 521.0 L535.5 522.7 L535.6 524.8 L536.2 526.8 L537.2 528.8 L538.1 530.9 L539.2 533.0 L540.7 534.9 L542.4 536.7 L543.5 538.8 L543.9 541.0 L544.3 543.2 L545.1 545.1 L546.1 547.2 L546.9 549.3 L548.0 551.4 L549.4 553.3 L550.6 555.3 L551.1 557.5 L551.4 559.6 L552.0 561.4 L552.9 562.9 L553.6 564.1 L554.3 565.1 M946.6 354.8 L946.6 356.0 L946.8 357.6 L946.9 359.5 L946.7 361.6 L946.5 363.9 L946.0 366.2 L945.5 368.5 L945.5 370.8 L946.0 373.0 L946.1 375.0 L945.2 377.3 L944.2 379.4 L944.0 381.5 L944.5 383.6 L945.0 385.7 L945.2 387.7 L945.2 389.8 L945.0 391.9 L944.5 393.9 L943.8 396.0 L943.8 398.1 L944.3 400.4 L944.4 402.5 L943.5 404.6 L942.2 406.5 L941.5 408.6 L941.4 410.7 L941.3 412.7 L941.3 414.8 L941.3 416.8 L941.2 418.9 L940.6 420.9 L939.8 423.1 L939.8 425.4 L940.5 427.5 L941.1 429.8 L940.8 432.2 L940.0 434.6 L939.3 437.0 L939.0 439.3 L938.8 441.5 L938.6 443.4 L938.4 445.1 L938.2 446.3 M938.2 446.3 L937.8 447.6 L937.5 449.3 L937.4 451.3 L937.3 453.5 L936.8 455.9 L936.1 458.2 L936.3 460.4 L937.2 462.5 L937.8 465.0 L937.3 467.2 L936.3 469.4 L935.9 471.5 L936.0 473.8 L936.3 476.0 L936.3 478.2 L936.2 480.3 L935.9 482.4 L935.2 484.5 L934.5 486.8 L934.5 489.5 L935.2 491.4 L935.4 493.4 L934.5 495.3 L933.3 497.3 L932.7 499.4 L932.9 501.6 L932.9 503.8 L932.4 505.9 L931.6 507.8 L930.6 509.6 L929.6 511.8 L928.6 513.9 L928.1 516.0 L928.0 518.2 L927.5 520.2 L926.2 522.1 L924.8 523.9 L924.3 526.0 L924.7 528.4 L925.1 530.8 L924.9 533.1 L924.5 535.2 L924.3 537.3 L924.3 539.4 L924.5 541.4 L924.8 543.7 L925.1 546.0 L924.9 548.0 L923.9 549.8 L922.9 551.5 L922.7 553.5 L922.8 556.1 L922.4 558.8 L921.5 561.3 L920.8 563.5 L920.3 565.1 M938.2 446.3 L938.0 447.6 L938.2 449.3 L938.5 451.4 L938.6 453.6 L938.7 456.0 L938.8 458.3 L938.2 460.5 L938.0 462.6 L938.7 465.1 L939.0 467.5 L938.4 469.7 L937.8 471.8 L937.0 473.9 L935.5 475.9 L934.5 478.0 L934.5 480.1 L934.4 482.2 L933.6 484.3 L932.9 486.6 L932.2 489.2 L931.2 490.8 L930.6 492.6 L931.1 494.8 L931.6 497.0 L931.5 499.2 L931.4 501.3 L931.2 503.5 L930.3 505.5 L929.6 507.5 L930.0 509.5 L930.3 511.9 L930.0 514.2 L929.7 516.3 L929.3 518.5 L928.4 520.4 L927.6 522.4 L928.0 524.5 L928.6 526.6 L928.6 528.9 L928.7 531.2 L928.7 533.4 L927.8 535.5 L926.9 537.6 L926.8 539.7 L926.8 541.8 L925.9 544.0 L925.0 545.9 L924.0 547.7 L922.2 549.3 L920.6 550.9 L920.4 553.0 L920.5 555.7 L920.4 558.5 L920.4 561.2 L920.4 563.5 L920.3 565.1 M938.2 446.3 L938.2 447.6 L938.1 449.3 L937.8 451.3 L937.1 453.5 L936.9 455.9 L937.4 458.3 L937.3 460.5 L936.7 462.4 L936.3 464.8 L935.3 467.0 L934.3 469.1 L934.4 471.3 L934.8 473.6 L934.4 475.8 L934.1 478.0 L933.9 480.1 L933.2 482.1 L933.0 484.2 L933.8 486.7 L934.5 489.5 L934.7 491.3 L934.8 493.3 L934.7 495.4 L933.8 497.4 L933.6 499.5 L934.0 501.8 L933.9 504.0 L933.2 506.0 L932.6 508.0 L931.4 509.8 L929.7 511.8 L929.0 513.9 L928.9 516.2 L928.3 518.2 L927.6 520.2 L927.1 522.3 L926.0 524.2 L924.9 526.1 L925.1 528.5 L925.6 530.9 L925.6 533.1 L925.7 535.3 L925.5 537.5 L924.5 539.4 L923.8 541.2 L924.0 543.5 L924.0 545.6 L923.6 547.6 L923.5 549.7 L923.0 551.5 L921.9 553.3 L921.6 555.9 L921.7 558.7 L921.4 561.3 L920.9 563.5 L920.3 565.1 M938.2 452.4 L938.9 453.6 L939.8 455.2 L940.8 457.2 L941.8 459.5 L942.9 461.8 L943.7 464.2 L944.5 466.4 L946.0 468.1 L948.0 469.7 L949.4 471.6 L950.3 473.7 L951.1 475.7 L951.9 477.6 L952.3 479.3 L953.5 482.3 L954.5 484.5 L955.0 486.0 M925.4 541.6 L925.8 542.9 L926.3 544.7 L927.3 546.8 L928.7 548.8 L929.9 551.0 L930.5 553.3 L931.4 555.5 L932.8 557.7 L934.1 560.0 L935.4 562.1 L936.5 563.8 L937.2 565.1 M923.7 543.2 L923.1 544.5 L922.3 546.3 L921.3 548.4 L919.9 550.5 L918.5 552.6 L917.8 554.9 L917.3 556.9 L915.8 559.5 L914.3 561.9 L913.0 563.8 L911.9 565.1 M1108.1 375.0 L1108.8 376.6 L1110.0 379.0 L1109.9 381.7 L1108.8 382.9 L1107.5 384.1 L1106.2 385.6 L1104.9 387.4 L1104.1 389.6 L1103.6 392.1 L1102.8 393.7 L1101.3 395.4 L1100.6 397.5 L1100.7 399.9 L1100.7 402.3 L1100.2 404.5 L1099.5 406.7 L1098.6 408.8 L1097.3 410.7 L1096.4 412.7 L1096.4 415.0 L1096.4 417.3 L1095.3 419.3 L1093.7 421.1 L1092.8 423.1 L1092.3 425.3 L1091.8 427.4 L1091.6 429.6 L1091.4 431.8 L1090.6 433.9 L1089.2 435.7 L1088.5 437.8 L1088.7 440.2 L1088.6 442.6 L1087.8 444.5 L1086.6 446.3 L1085.4 448.1 L1084.1 449.8 L1083.0 451.6 L1082.6 453.8 L1082.2 455.9 L1080.9 457.5 L1079.2 459.0 L1078.4 461.1 L1078.3 463.3 L1078.3 465.4 L1078.3 467.5 L1078.3 469.6 L1077.9 471.7 L1077.0 473.7 L1076.6 475.8 L1077.2 478.0 L1077.7 480.2 L1077.1 482.3 L1076.3 484.3 L1075.8 486.4 L1075.4 488.5 L1075.1 490.7 L1075.2 493.0 L1075.2 495.3 L1074.1 497.6 L1072.4 499.8 L1071.5 502.2 L1071.1 504.5 L1070.5 506.6 L1069.9 508.3 L1069.4 509.6 M1068.4 510.3 L1067.9 511.4 L1067.2 512.9 L1066.4 514.7 L1065.3 516.6 L1064.8 518.9 L1065.2 521.5 L1064.8 523.7 L1063.7 525.3 L1062.8 527.3 L1062.3 529.4 L1061.7 531.5 L1061.6 533.8 L1061.6 536.1 L1060.7 538.1 L1059.1 539.8 L1058.0 541.8 L1057.7 543.9 L1057.2 545.9 L1056.5 547.9 L1055.9 549.8 L1054.7 551.4 L1053.3 553.0 L1052.9 555.3 L1053.0 557.8 L1052.5 560.1 L1051.7 562.1 L1051.2 563.8 L1050.9 565.1 M1068.4 510.3 L1067.9 511.4 L1067.2 512.9 L1066.1 514.6 L1064.8 516.4 L1063.7 518.4 L1062.8 520.7 L1062.3 522.9 L1062.1 525.0 L1061.9 527.1 L1060.9 529.1 L1059.6 531.2 L1059.0 533.4 L1059.4 535.6 L1059.6 537.8 L1059.0 539.8 L1057.9 541.7 L1057.2 543.7 L1056.7 545.8 L1056.3 547.8 L1056.3 550.0 L1056.4 552.1 L1056.0 553.9 L1054.5 555.8 L1053.3 557.9 L1052.8 560.2 L1052.3 562.3 L1051.6 563.9 L1050.9 565.1 M936.5 475.9 L937.7 476.8 L939.4 477.8 L941.4 479.1 L943.5 480.6 L945.7 482.0 L947.8 483.5 L949.7 485.0 L951.5 486.2 L953.6 486.6 L955.8 486.4 L957.9 486.4 L959.9 487.0 L961.9 487.7 L963.9 488.6 L965.6 490.0 L967.1 491.8 L968.7 493.5 L970.7 494.6 L972.9 495.4 L974.9 496.6 L976.9 497.8 L978.8 498.8 L980.8 499.5 L982.8 500.5 L984.8 501.6 L987.0 502.1 L989.4 501.9 L991.8 501.7 L994.0 502.0 L996.1 502.7 L998.3 503.3 L1000.4 504.1 L1002.4 505.3 L1004.4 506.5 L1006.5 507.1 L1008.6 507.3 L1010.7 507.5 L1012.7 508.4 L1014.6 509.5 L1016.5 510.4 L1018.3 511.3 L1020.0 512.4 L1021.9 513.1 L1023.9 513.0 L1026.4 512.2 L1028.9 511.6 L1031.3 511.5 L1033.6 511.3 L1035.7 510.9 L1037.3 510.9 L1039.5 509.5 L1041.0 508.3 L1042.3 508.1 L1044.2 508.1 L1046.2 508.8 L1048.4 509.8 L1050.9 510.5 L1052.8 510.8 L1055.1 511.2 L1057.5 511.4 L1060.0 511.1 L1062.4 510.5 L1064.6 510.1 L1066.4 510.1 L1067.8 510.3 M943.3 459.1 L944.1 460.4 L945.4 462.0 L946.7 464.0 L947.9 466.4 L949.1 468.7 L950.1 470.9 L950.7 472.9 L951.8 474.7 L953.2 476.4 L953.9 478.4 L954.0 480.7 L954.4 483.0 L955.2 484.9 L955.9 486.9 L957.0 488.7 L958.8 490.3 L960.3 492.0 L961.0 494.1 L961.5 496.3 L962.6 498.2 L963.8 500.0 L964.9 501.9 L966.4 503.5 L968.0 505.2 L968.8 507.2 L968.7 509.5 L968.9 512.0 L969.4 514.3 L969.8 516.6 L970.3 518.9 L971.3 521.0 L972.2 522.9 L972.4 525.1 L973.0 527.3 L974.4 528.9 L975.9 530.2 L977.3 531.6 L978.9 533.0 L980.6 534.7 L981.5 536.8 L981.8 539.2 L982.6 541.3 L983.9 543.1 L984.7 545.1 L985.3 547.2 L986.1 549.1 L986.5 551.1 L986.7 553.5 L987.3 555.6 L989.1 557.0 L991.2 558.4 L993.0 559.9 L994.7 561.3 L996.2 562.5 L997.1 563.4 M1050.9 563.4 L1052.7 562.1 L1055.2 560.1 L1057.7 559.0 L1059.7 560.1 L1061.4 562.0 L1063.2 563.9 L1064.4 565.1" fill="none" stroke="#0c1479" stroke-width="1.05" stroke-linejoin="round" stroke-linecap="round"/>
<g opacity="0.9">
<circle cx="445.5" cy="187.5" r="6.4" fill="url(#sd)" />
<circle cx="1153.4" cy="285" r="6.8" fill="url(#sd)" />
<circle cx="387.7" cy="428.8" r="4.2" fill="url(#sg)" />
<circle cx="912" cy="519" r="4.8" fill="url(#sg)" />
</g>
<path d="M396.1 170.1 L397.4 169.7 L399.1 169.1 L401.3 168.7 L403.7 168.4 L406.2 167.4 L408.7 165.9 L410.6 165.6 L412.6 165.9 L414.8 166.1 L417.1 166.3 L419.3 166.5 L421.6 165.9 L423.7 165.2 L425.9 165.5 L428.0 166.3 L430.2 166.3 L432.3 165.5 L434.4 164.7 L436.4 164.2 L438.3 163.7 L440.3 163.6 L442.2 163.8 L443.9 163.3 L446.4 161.9 L449.0 161.1 L451.5 160.8 L453.6 160.4 L455.0 159.9 M392.9 171.7 L394.1 172.0 L395.7 172.3 L397.6 172.5 L399.7 173.0 L401.9 173.4 L404.3 173.4 L406.7 173.7 L408.8 174.8 L410.7 175.9 L412.8 176.5 L415.0 177.2 L417.1 178.2 L419.5 178.4 L421.9 178.1 L424.1 178.2 L426.2 178.7 L428.2 178.9 L430.7 179.5 L432.7 180.9 L434.5 182.2 L436.5 182.9 L438.6 183.5 L440.7 184.5 L442.8 185.1 L445.2 185.4 L447.6 186.3 L449.8 187.5 L451.9 188.3 L453.7 188.9 L455.0 189.2 M455.0 160.6 L456.3 160.3 L458.1 160.0 L460.1 159.3 L462.2 158.3 L464.6 157.4 L467.0 156.5 L469.5 156.1 L472.0 156.3 L474.2 156.3 L476.3 155.3 L478.3 154.3 L480.4 154.4 L482.5 154.9 L484.6 154.9 L486.6 154.6 L488.5 154.0 L490.2 152.9 L491.8 151.3 L493.6 150.3 L495.8 149.8 L497.6 148.8 L498.9 147.0 L500.4 145.1 L502.3 143.8 L504.2 142.9 L506.3 142.1 L508.7 141.7 L511.0 141.1 L512.9 139.6 L514.6 138.1 L516.7 137.4 L519.0 137.2 L521.1 136.6 L523.0 135.6 L524.9 134.5 L526.5 133.2 L527.9 131.6 L529.6 130.8 L531.6 130.5 L533.8 129.5 L535.4 127.7 L536.8 125.8 L538.6 124.5 L540.5 123.3 L542.3 122.4 L544.2 121.6 L546.0 120.7 L547.3 119.0 L548.5 117.1 L550.4 115.8 L552.6 115.3 L554.6 114.2 L556.3 112.7 L558.0 111.1 L559.6 109.3 L561.1 107.3 L562.9 105.9 L565.2 105.1 L567.4 104.0 L568.9 102.0 L570.4 100.0 L572.2 98.7 L574.1 97.7 L575.8 96.7 L577.9 95.4 L579.5 94.0 L580.2 92.2 L580.7 90.3 L582.3 88.8 L584.3 88.2 L586.0 87.3 L587.4 85.9 L588.9 84.3 L590.3 82.5 L591.5 80.5 L592.7 78.9 L594.7 77.5 L596.4 75.7 L597.2 73.3 L597.9 70.9 L599.4 69.1 L601.2 67.9 L603.4 66.6 L605.5 65.8 L607.6 65.2 L609.4 63.7 L610.9 61.6 L612.3 60.4 L614.4 59.4 L616.1 58.0 L617.2 56.0 L618.1 54.0 L619.1 52.1 L620.0 50.2 L621.5 48.5 L623.4 47.3 L625.2 45.9 L626.1 44.0 L626.8 42.1 L628.0 40.8 L629.8 38.8 L631.2 36.6 L632.1 34.6 L632.7 33.2 M455.0 190.8 L456.3 191.4 L457.9 192.3 L460.1 193.1 L462.6 193.6 L465.1 194.3 L467.7 195.5 L469.5 196.2 L471.6 196.0 L473.9 195.5 L476.2 195.1 L478.4 194.8 L480.7 194.5 L482.9 194.9 L485.0 195.7 L486.8 196.0 L489.3 195.3 L491.5 194.7 L493.6 195.0 L495.6 195.6 L497.5 196.1 L499.5 196.5 L501.4 197.0 L503.3 197.2 L505.4 197.1 L507.5 197.4 L509.7 198.4 L512.3 199.3 L514.0 199.2 L515.8 198.4 L517.7 197.8 L519.7 197.6 L521.7 197.5 L523.9 197.7 L526.1 198.2 L528.4 198.5 L530.5 198.0 L532.5 197.1 L534.6 196.9 L536.7 197.5 L538.8 197.9 L540.8 197.7 L542.9 197.4 L544.9 196.9 L547.0 196.1 L549.0 195.4 L551.0 195.6 L553.1 196.2 L555.0 196.2 L556.9 195.3 L559.0 194.3 L561.2 194.0 L563.4 193.9 L565.6 193.8 L567.9 193.7 L570.1 193.6 L572.1 192.8 L573.9 191.4 L575.9 190.5 L578.2 190.4 L580.5 190.5 L582.6 189.9 L584.7 188.8 L586.8 187.9 L588.8 187.0 L590.8 186.2 L592.9 185.8 L595.1 186.0 L597.5 185.8 L599.5 184.7 L601.4 183.3 L603.5 182.5 L605.7 182.3 L607.8 181.9 L609.7 181.3 L611.5 180.6 L613.8 179.0 L615.2 177.0 L616.4 175.0 L618.3 173.9 L620.7 173.5 L622.6 173.0 L624.6 172.0 L626.7 171.2 L628.8 170.7 L630.9 170.2 L633.1 169.6 L635.3 169.2 L637.5 168.4 L639.3 166.9 L640.7 164.7 L642.3 162.9 L644.4 161.9 L646.4 161.2 L648.5 160.3 L650.5 159.4 L652.5 158.5 L654.5 157.3 L656.3 155.9 L658.3 154.9 L660.3 154.5 L662.2 153.6 L663.6 151.9 L664.8 150.0 L666.3 148.4 L668.2 147.1 L670.0 146.0 L671.9 145.1 L674.0 144.3 L675.8 143.1 L677.2 141.3 L678.6 139.6 L680.5 138.6 L682.7 138.1 L684.6 137.1 L686.2 135.6 L687.9 134.0 L689.6 132.5 L691.3 130.9 L693.2 129.7 L695.3 129.4 L697.3 129.3 L699.6 128.1 L701.2 126.7 L702.9 125.9 L705.0 125.6 L707.6 125.1 L710.3 124.3 L712.8 123.6 L714.6 123.0 M713.6 124.3 L713.1 125.5 L712.4 127.3 L712.0 129.4 L711.8 131.9 L711.3 134.3 L710.2 136.3 L709.3 138.1 L708.5 140.3 L707.7 142.3 L706.9 144.2 L706.3 146.2 L706.0 148.3 L705.2 150.3 L703.6 151.8 L701.8 153.2 L700.6 155.1 L700.0 157.3 L699.6 159.3 L699.1 161.3 L698.6 163.3 L698.1 165.5 L697.2 167.7 L696.0 169.9 L695.4 171.7 L695.5 173.8 L695.8 176.1 L695.6 178.3 L694.8 180.4 L693.9 182.3 L693.2 184.3 L692.4 186.1 L691.3 188.3 L690.7 190.6 L690.4 193.0 L689.7 195.1 L688.3 196.8 L686.9 198.6 L686.1 201.1 L685.7 203.8 L685.5 206.3 L685.2 208.4 L684.9 209.9 M706.6 33.2 L706.6 34.4 L706.8 35.9 L707.2 37.6 L707.4 39.6 L707.2 41.8 L706.7 44.2 L706.6 46.6 L706.4 49.0 L706.1 51.3 L706.2 53.6 L706.8 55.6 L707.6 57.6 L707.8 59.6 L707.5 61.6 L707.4 63.7 L707.8 65.7 L708.3 67.7 L708.8 69.7 L709.7 71.7 L711.1 73.7 L712.3 75.6 L712.7 77.6 L712.5 79.6 L712.3 81.7 L712.4 83.7 L712.3 85.8 L712.1 87.8 L712.0 89.8 L712.3 91.8 L712.3 93.9 L711.7 95.9 L710.7 98.1 L710.1 100.2 L710.1 102.3 L710.3 104.3 L710.5 106.4 L710.9 108.4 L711.7 110.4 L712.3 112.3 L712.2 114.4 L711.8 116.6 L711.8 118.6 L712.3 120.6 L712.9 122.5 L713.3 124.5 L714.0 126.5 L715.0 128.4 L715.7 130.4 L715.7 132.5 L715.6 134.5 L716.0 136.5 L717.0 138.5 L717.9 140.4 L718.5 142.4 L719.1 144.3 L719.7 146.3 L719.8 148.3 L719.1 150.4 L718.2 152.6 L717.8 154.7 L718.0 156.8 L718.1 158.8 L717.9 160.9 L717.9 163.0 L718.0 165.1 L717.9 167.1 L717.5 169.3 L717.1 171.4 L717.5 173.5 L718.5 175.4 L719.4 177.4 L720.0 179.4 L720.6 181.4 L721.2 183.3 L721.5 185.3 L721.4 187.4 L721.3 189.4 L722.0 191.6 L723.3 193.8 L724.3 196.1 L725.0 198.5 L725.2 200.8 L725.4 203.1 L725.3 205.2 L725.1 207.1 L724.9 208.7 L724.7 209.9 M706.6 33.2 L706.6 34.4 L706.9 35.9 L707.7 37.6 L708.4 39.5 L708.7 41.7 L709.3 43.9 L710.1 46.2 L710.6 48.6 L710.8 50.9 L711.2 53.2 L711.6 55.3 L711.2 57.4 L710.0 59.5 L709.1 61.6 L708.6 63.6 L708.1 65.6 L707.7 67.7 L707.8 69.7 L708.4 71.7 L708.5 73.8 L708.1 75.8 L707.8 77.9 L708.0 79.9 L708.1 81.9 L708.2 84.0 L708.9 86.0 L710.1 87.9 L710.9 89.9 L711.0 91.9 L711.1 94.0 L711.5 96.0 L711.8 98.0 L711.9 100.0 L712.5 102.0 L713.8 103.8 L714.8 105.7 L715.1 107.8 L715.2 109.8 L715.3 111.9 L715.0 114.0 L714.3 116.2 L713.9 118.3 L714.2 120.3 L714.4 122.4 L714.0 124.5 L713.5 126.5 L713.3 128.6 L712.8 130.6 L712.0 132.7 L711.9 134.7 L712.7 136.7 L713.8 138.7 L714.6 140.7 L715.5 142.7 L716.6 144.6 L717.3 146.6 L717.5 148.6 L717.7 150.6 L718.6 152.6 L719.6 154.5 L720.1 156.5 L720.5 158.5 L721.1 160.5 L721.1 162.5 L720.4 164.7 L719.7 166.9 L719.6 169.0 L719.8 171.0 L719.8 173.1 L720.0 175.2 L720.6 177.2 L720.9 179.2 L720.5 181.4 L719.9 183.5 L719.9 185.6 L720.2 187.5 L720.4 189.5 L720.8 191.7 L721.8 193.9 L722.8 196.3 L723.0 198.7 L723.1 201.1 L723.6 203.3 L724.2 205.3 L724.5 207.1 L724.7 208.7 L724.7 209.9 M705.0 151.0 L705.5 149.6 L706.2 147.7 L707.5 145.6 L708.7 143.2 L709.3 140.7 L709.8 138.3 L710.3 135.9 L710.9 133.3 L712.2 131.0 L713.4 128.9 L714.0 126.9 L714.6 125.5 M885.9 33.2 L885.4 34.3 L885.0 35.8 L884.3 37.5 L883.3 39.5 L882.7 41.6 L882.5 43.9 L882.8 46.3 L883.5 48.7 L884.4 51.1 L884.7 53.4 L884.1 55.5 L883.9 57.5 L884.5 59.6 L885.2 61.8 L885.5 63.9 L885.8 66.0 L886.0 68.1 L885.5 70.2 L884.7 72.2 L884.5 74.1 L885.2 76.0 L885.6 77.7 L885.4 80.2 L885.2 82.5 L885.0 84.6 L884.6 86.7 L884.2 88.9 L884.4 91.1 L885.0 93.7 L884.8 95.5 L883.7 97.3 L882.7 99.2 L882.1 101.1 L881.4 103.1 L880.9 105.2 L881.0 107.4 L881.1 109.6 L880.3 111.6 L879.1 113.6 L878.6 115.7 L878.9 117.8 L879.2 119.9 L879.5 122.0 L880.1 124.1 L880.5 126.3 L880.1 128.3 L879.8 130.4 L880.5 132.4 L881.7 134.5 L882.5 136.4 L882.8 138.1 L883.3 140.2 L883.6 142.1 L883.4 144.2 L883.7 146.3 L884.8 148.2 L885.8 150.3 L885.7 152.6 L885.0 155.0 L884.3 157.4 L883.4 159.3 L882.4 161.2 L881.7 163.2 L881.5 165.3 L880.9 167.4 L879.4 169.2 L877.9 171.1 L877.1 173.1 L876.7 175.3 L876.5 177.4 L876.6 179.5 L877.2 182.0 L877.2 184.4 L876.7 186.8 L876.7 189.1 L877.6 191.2 L878.7 193.2 L879.4 195.2 L880.0 197.0 L880.4 198.8 L880.2 201.7 L879.8 204.3 L879.8 206.7 L879.8 208.6 L879.5 209.9 M885.9 33.2 L886.1 34.4 L886.1 35.9 L886.2 37.7 L886.6 39.8 L887.0 42.0 L886.9 44.3 L885.8 46.5 L884.8 48.8 L884.6 51.1 L885.0 53.4 L885.0 55.5 L884.0 57.5 L882.5 59.6 L881.6 61.6 L881.5 63.8 L881.7 65.9 L881.5 68.0 L881.0 70.1 L880.5 72.1 L880.3 74.1 L880.5 76.0 L881.0 77.8 L882.1 80.4 L883.2 82.6 L883.9 84.7 L884.1 86.8 L884.4 88.9 L885.5 91.1 L886.8 93.8 L887.5 95.7 L887.0 97.6 L886.0 99.6 L885.4 101.6 L885.4 103.7 L885.5 105.8 L885.0 107.9 L883.9 109.9 L882.9 111.9 L882.0 113.9 L881.4 116.0 L881.1 118.0 L881.0 120.0 L880.8 122.1 L880.1 124.1 L878.9 126.1 L878.2 128.2 L878.3 130.3 L878.9 132.4 L879.0 134.4 L878.4 136.4 L877.6 138.4 L877.7 140.9 L878.8 143.0 L880.1 145.0 L881.1 147.0 L881.7 149.0 L882.3 151.0 L883.1 153.0 L884.0 155.1 L884.8 157.4 L885.6 159.6 L885.9 161.8 L885.4 164.0 L884.3 166.0 L883.4 168.1 L883.1 170.2 L883.0 172.5 L882.3 174.4 L880.6 176.1 L878.8 177.8 L877.9 179.6 L877.8 182.0 L878.0 184.3 L877.7 186.7 L877.1 189.1 L876.8 191.4 L876.9 193.5 L877.3 195.5 L877.9 197.2 L878.8 198.8 L879.3 201.7 L879.3 204.3 L879.2 206.6 L879.4 208.5 L879.5 209.9 M837.2 33.2 L837.5 34.5 L838.1 36.1 L839.1 38.1 L840.2 40.2 L841.2 42.4 L842.1 44.7 L842.8 47.0 L843.5 49.1 L844.7 50.9 L846.5 52.2 L848.2 53.4 L849.4 55.2 L850.1 57.5 L851.2 59.4 L852.8 60.7 L854.6 61.9 L856.1 63.7 L857.3 65.7 L858.5 67.7 L859.6 69.7 L860.8 71.6 L862.3 73.3 L864.3 74.5 L866.2 75.8 L867.4 77.7 L868.2 79.9 L869.3 81.7 L871.2 82.8 L873.1 83.7 L874.4 85.0 L876.2 87.0 L878.2 88.8 L880.2 90.2 L882.0 91.3 L883.3 92.1 M924.7 33.2 L924.4 34.4 L923.6 35.9 L922.5 37.5 L921.3 39.4 L920.3 41.5 L919.2 43.7 L918.2 45.8 L917.5 47.6 L916.4 49.2 L914.8 50.7 L913.3 52.3 L912.5 54.4 L912.3 56.8 L911.8 58.9 L910.5 60.6 L909.0 62.0 L907.5 63.9 L906.2 65.9 L904.9 67.8 L903.7 69.7 L902.5 71.7 L901.2 73.4 L899.4 74.7 L897.2 76.1 L895.5 77.9 L894.5 80.1 L893.8 82.4 L892.5 84.1 L891.1 85.6 L889.5 87.9 L888.2 90.3 L887.2 92.3 L886.5 93.7 M886.5 95.3 L887.1 96.5 L887.9 98.1 L888.6 100.2 L889.6 102.5 L891.3 104.4 L893.6 105.9 L894.9 107.0 L895.8 108.6 L896.9 110.2 L898.2 111.7 L899.5 113.3 L901.1 114.7 L903.1 115.7 L904.7 117.1 L905.6 119.2 L906.2 121.3 L907.4 122.9 L909.0 124.4 L910.5 125.9 L912.1 127.4 L913.8 128.8 L915.0 130.5 L915.7 132.6 L916.8 134.1 L918.5 135.0 L920.8 136.5 L922.5 138.1 L923.8 139.8 L925.2 141.4 L926.3 143.2 L927.5 145.2 L929.5 146.4 L931.8 147.0 L933.8 148.2 L935.4 150.0 L936.9 151.7 L938.5 153.2 L939.9 154.9 L941.4 156.5 L943.4 158.0 L945.2 159.6 L946.2 161.6 L946.9 163.9 L948.3 165.7 L950.1 167.3 L951.8 169.0 L953.1 170.7 L954.3 172.2 L955.0 173.3 M956.3 77.8 L956.0 79.0 L955.7 80.6 L955.2 82.5 L954.5 84.6 L954.1 86.9 L954.4 89.3 L954.4 91.6 L953.8 93.7 L953.2 95.7 L953.0 97.7 L952.5 99.6 L951.7 101.6 L951.5 103.6 L951.8 105.8 L951.8 107.9 L951.1 109.9 L950.3 111.9 L949.5 113.9 L948.2 115.7 L946.5 117.3 L945.2 119.1 L944.7 121.3 L944.2 123.4 L943.5 125.4 L943.0 127.5 L942.8 129.6 L942.0 131.6 L940.8 133.4 L939.9 135.3 L939.8 137.4 L939.6 139.5 L939.3 141.5 L939.4 143.5 L939.8 145.6 L939.6 147.5 L938.7 149.5 L938.0 151.4 L937.6 153.4 L937.2 155.3 L936.5 157.2 L936.3 159.2 L936.4 161.4 L936.1 163.4 L935.2 165.3 L934.3 167.3 L933.7 169.3 L933.0 171.2 L932.1 173.2 L932.0 175.3 L932.4 177.5 L932.6 179.6 L932.1 181.6 L931.6 183.6 L931.1 185.6 L930.2 187.4 L928.9 189.1 L927.8 191.3 L927.4 193.7 L926.8 196.0 L925.9 198.1 L925.3 200.1 L924.9 202.0 L924.1 204.5 L923.5 206.7 L923.2 208.6 L923.2 209.9 M967.5 33.2 L967.7 34.5 L967.7 36.4 L967.9 38.6 L968.3 41.0 L968.7 43.5 L968.4 45.9 L967.9 47.7 L967.2 49.6 L966.4 51.5 L965.5 53.5 L965.1 55.7 L965.1 58.1 L964.8 60.3 L963.6 62.2 L962.0 64.0 L960.8 66.1 L960.1 68.5 L959.3 70.9 L958.4 73.0 L957.6 74.9 L956.9 76.5 L956.4 77.8 M950.0 166.9 L950.9 168.1 L952.3 169.4 L954.1 170.9 L955.8 172.8 L957.4 174.9 L959.2 176.9 L960.4 178.5 L961.7 180.1 L963.7 181.0 L966.0 181.6 L967.8 182.9 L969.3 184.5 L970.9 185.9 L972.4 187.5 L973.7 189.3 L975.5 190.4 L977.7 191.1 L979.4 192.4 L980.7 194.1 L982.1 195.7 L983.4 197.5 L984.5 199.4 L986.2 200.9 L988.5 201.9 L990.4 203.4 L992.1 205.1 L993.9 206.7 L995.4 208.1 L996.7 209.2 L997.8 209.9 M684.9 209.6 L685.1 210.9 L685.3 212.9 L684.7 216.0 L683.8 217.5 L682.5 219.1 L681.7 221.1 L681.2 223.3 L680.3 225.5 L679.5 227.7 L679.0 230.0 L678.2 232.0 L676.6 233.7 L675.0 235.2 L674.0 237.0 L673.2 239.0 L672.2 240.9 L671.3 242.8 L671.0 245.1 L670.5 246.9 L669.3 248.6 L667.9 250.3 L667.1 252.3 L666.4 254.3 L665.6 256.3 L665.0 258.3 L665.1 260.5 L664.9 262.6 L664.1 264.6 L663.1 266.5 L662.5 268.6 L662.0 270.6 L661.2 272.5 L660.8 274.5 L660.9 276.6 L660.7 278.9 L659.7 280.8 L658.4 282.5 L657.3 284.1 L656.0 285.7 L654.4 287.1 L653.1 288.7 L652.6 290.7 L652.0 292.9 L651.0 294.8 L649.9 296.6 L649.1 298.5 L648.3 300.2 L647.1 301.7 L646.2 304.3 L646.6 306.7 L647.2 309.0 L646.8 311.7 L646.3 313.5 L645.7 315.4 L644.6 317.1 L642.9 318.6 L641.2 320.1 L640.1 322.0 L639.3 324.0 L638.3 325.7 L637.3 327.6 L636.5 329.6 L635.5 331.4 L633.8 332.9 L632.3 334.6 L631.3 336.7 L630.6 338.7 L629.6 340.8 L628.9 343.0 L628.4 345.4 L627.7 347.6 L626.2 349.4 L624.7 351.0 L623.6 352.8 L622.7 355.1 L621.9 357.2 L621.6 359.2 L621.9 361.3 L621.8 363.5 L620.6 365.6 L619.4 367.0 L618.2 368.8 L616.8 370.6 L615.2 372.3 L613.9 374.3 L612.8 376.3 L611.6 377.9 L610.4 379.1 L609.5 379.9 M723.5 209.6 L723.7 211.1 L724.1 213.2 L724.3 216.0 L723.9 219.4 L723.5 221.0 L723.9 222.8 L724.4 224.7 L725.1 226.7 L725.9 228.8 L726.0 231.1 L725.8 233.4 L726.6 235.8 L728.0 238.1 L728.8 240.0 L729.6 241.9 L730.3 243.8 L730.1 246.0 L729.7 248.2 L730.2 250.4 L731.1 252.5 L731.4 254.7 L731.6 256.9 L731.8 259.2 L731.1 261.5 L730.4 263.7 L730.9 265.8 L731.6 267.9 L731.7 270.1 L731.7 272.3 L731.6 274.4 L730.9 276.7 L730.3 278.8 L730.8 281.0 L731.4 283.0 L731.2 285.1 L731.1 287.2 L730.9 289.3 L730.1 291.6 L729.8 293.7 L730.8 295.7 L731.6 297.6 L731.9 299.6 L732.3 301.5 L732.7 303.5 L732.6 305.5 L733.2 307.5 L734.8 309.4 L736.0 311.4 L736.5 313.4 L736.9 315.4 L737.2 317.6 L736.9 319.7 L737.3 321.9 L738.4 324.0 L738.9 326.1 L738.5 328.3 L738.3 330.5 L737.9 332.7 L737.2 334.8 L737.3 336.9 L738.2 339.0 L738.5 341.2 L738.1 343.5 L737.9 345.9 L737.8 348.2 L737.4 350.6 L738.0 352.7 L738.9 354.7 L739.0 356.6 L738.9 358.3 L739.1 359.7 L739.4 360.8 M723.5 209.6 L724.1 211.0 L724.7 213.1 L725.4 215.8 L726.1 219.0 L726.2 220.7 L726.4 222.6 L727.5 224.4 L728.4 226.5 L728.6 228.6 L729.0 230.8 L729.3 233.2 L728.6 235.6 L728.1 238.1 L728.3 240.0 L728.3 242.0 L728.2 244.1 L728.6 246.2 L728.7 248.4 L728.0 250.7 L727.4 253.0 L727.3 255.2 L727.0 257.5 L727.0 259.7 L728.1 261.8 L729.0 263.8 L729.3 265.9 L729.9 268.0 L730.4 270.2 L730.2 272.4 L730.2 274.5 L731.1 276.6 L731.7 278.8 L732.2 280.9 L733.0 282.9 L733.6 285.0 L733.2 287.1 L732.9 289.1 L733.2 291.2 L733.2 293.3 L733.5 295.3 L734.6 297.1 L735.5 299.0 L735.6 301.0 L735.8 303.0 L735.9 305.0 L735.4 307.2 L735.0 309.3 L735.4 311.4 L735.6 313.5 L735.4 315.6 L735.6 317.7 L735.5 319.8 L734.4 322.0 L733.7 324.2 L733.6 326.4 L733.5 328.6 L733.6 330.8 L734.7 332.9 L735.6 334.9 L735.8 337.0 L736.3 339.1 L736.9 341.3 L736.9 343.6 L737.4 345.9 L738.6 348.1 L739.6 350.3 L739.9 352.5 L740.2 354.5 L740.1 356.4 L739.6 358.2 L739.4 359.7 L739.4 360.8 M723.5 209.6 L724.2 211.0 L724.7 213.1 L724.9 215.9 L725.5 219.1 L725.8 220.8 L725.6 222.6 L725.2 224.6 L725.0 226.7 L724.5 228.9 L724.1 231.2 L725.0 233.5 L726.1 235.8 L726.5 238.3 L726.6 240.2 L726.9 242.2 L726.9 244.3 L727.0 246.4 L728.1 248.4 L729.5 250.5 L729.9 252.7 L729.8 254.9 L730.1 257.1 L730.4 259.3 L730.6 261.5 L731.6 263.6 L732.9 265.7 L733.1 267.8 L732.7 270.0 L732.6 272.2 L732.5 274.4 L732.3 276.6 L732.5 278.7 L733.0 280.8 L732.5 283.0 L731.3 285.1 L730.6 287.3 L730.4 289.3 L730.2 291.6 L730.6 293.7 L731.4 295.6 L731.5 297.7 L731.0 299.7 L731.3 301.7 L732.3 303.6 L733.2 305.4 L734.3 307.3 L735.7 309.2 L736.2 311.4 L735.9 313.4 L736.1 315.5 L736.9 317.6 L737.5 319.7 L737.9 321.8 L738.4 324.0 L738.2 326.2 L737.2 328.4 L736.8 330.6 L737.3 332.7 L737.7 334.8 L737.7 336.9 L738.0 339.0 L737.8 341.2 L737.0 343.6 L736.7 346.0 L737.4 348.3 L737.9 350.5 L738.0 352.7 L738.2 354.8 L738.3 356.6 L738.4 358.3 L738.8 359.7 L739.4 360.8 M739.4 361.8 L739.7 363.2 L740.2 365.2 L740.6 367.6 L741.1 369.9 L741.3 372.0 L741.5 374.4 L742.2 376.7 L742.9 378.6 L743.2 379.9 M739.4 361.8 L740.5 362.6 L741.8 363.9 L743.3 365.6 L745.3 367.1 L747.3 368.6 L748.8 370.2 L750.0 371.7 L751.1 374.2 L751.6 376.7 L752.2 378.6 L752.8 379.9 M739.4 361.8 L738.5 363.0 L737.1 364.8 L735.4 366.7 L733.6 368.7 L732.1 369.9 L730.2 371.1 L728.6 372.8 L727.2 374.6 L725.8 376.1 L724.3 377.1 L721.2 379.0 L719.3 379.9 M879.5 209.6 L879.8 211.0 L879.8 213.1 L879.3 215.8 L878.7 219.0 L878.3 220.7 L877.9 222.5 L877.8 224.6 L877.6 226.8 L876.5 229.0 L875.5 231.2 L875.6 233.6 L876.4 236.0 L876.6 238.2 L876.2 240.4 L876.0 242.5 L876.0 244.7 L876.1 246.9 L876.9 248.9 L878.0 251.0 L878.2 253.1 L877.6 255.3 L877.6 257.4 L878.6 259.4 L879.6 261.5 L880.1 263.5 L880.5 265.6 L880.6 267.7 L880.1 269.8 L880.2 272.0 L881.1 274.3 L881.5 276.7 L880.5 278.6 L879.3 280.5 L878.6 282.5 L878.1 284.5 L877.6 286.6 L877.3 288.7 L876.7 290.7 L875.3 292.6 L874.1 294.6 L874.1 296.6 L874.7 298.6 L874.5 301.0 L873.9 303.5 L873.4 305.9 L873.2 308.4 L873.2 310.7 L873.6 313.0 L873.9 314.9 L873.8 316.6 L873.8 317.8 M879.5 209.6 L879.5 211.0 L879.5 213.1 L879.6 215.8 L879.4 219.1 L878.9 220.8 L878.6 222.6 L879.1 224.8 L879.6 227.2 L879.6 229.5 L879.5 231.8 L879.6 234.0 L879.3 236.2 L878.4 238.3 L877.9 240.3 L878.1 242.4 L878.5 244.5 L878.5 246.6 L878.6 248.7 L878.9 250.8 L878.7 253.0 L877.8 255.3 L876.9 257.4 L876.7 259.5 L876.7 261.6 L876.5 263.6 L876.7 265.7 L877.4 267.7 L877.7 269.8 L877.2 271.9 L876.9 274.1 L877.0 276.3 L877.2 278.2 L877.2 280.2 L877.6 282.3 L878.5 284.6 L879.0 286.8 L878.7 288.9 L878.3 291.0 L878.1 293.1 L877.6 295.1 L876.9 297.0 L876.7 298.9 L877.0 301.3 L877.0 303.7 L876.4 306.2 L875.5 308.6 L874.9 310.9 L874.2 313.0 L873.7 314.9 L873.6 316.5 L873.8 317.8 M873.8 319.4 L873.7 320.7 L873.4 322.5 L873.0 324.6 L872.8 326.9 L873.2 329.4 L873.3 331.7 L872.7 333.7 L872.0 335.8 L871.6 337.8 L871.4 339.7 L871.1 341.7 L871.2 343.9 L871.9 346.5 L872.6 348.4 L872.5 350.5 L871.9 352.6 L871.7 354.8 L871.9 357.1 L872.1 359.4 L872.2 361.7 L872.6 363.8 L873.0 365.7 L872.8 368.1 L871.6 370.5 L870.8 372.8 L870.5 375.0 L870.6 377.0 L870.6 378.7 L870.6 379.9 M873.8 319.4 L873.7 320.7 L873.8 322.5 L874.1 324.7 L874.7 327.0 L875.0 329.4 L874.7 331.7 L873.9 333.8 L873.6 335.9 L873.8 338.0 L873.9 339.9 L873.6 341.9 L873.2 344.1 L872.8 346.5 L872.2 348.4 L871.1 350.3 L870.0 352.4 L869.4 354.6 L869.5 356.9 L869.9 359.3 L869.9 361.5 L869.6 363.6 L869.4 365.6 L869.4 368.0 L869.6 370.5 L869.8 372.8 L870.2 375.1 L870.6 377.0 L870.8 378.7 L870.6 379.9 M872.2 346.5 L873.5 347.9 L875.2 350.0 L876.7 353.0 L876.9 354.9 L877.6 356.9 L878.6 359.0 L879.5 361.2 L880.8 363.3 L882.4 365.4 L883.1 367.5 L883.7 370.0 L884.8 372.3 L885.8 374.7 L886.6 376.9 L887.5 378.6 L888.1 379.9 M923.2 209.6 L921.7 212.8 L921.2 214.2 L920.3 215.8 L918.9 217.4 L917.7 219.3 L917.2 221.6 L916.5 223.7 L915.0 225.4 L913.8 227.0 L912.6 228.6 L911.4 230.2 L911.0 232.3 L911.0 234.6 L910.2 236.5 L908.7 238.2 L907.9 240.0 L907.7 242.1 L907.5 244.2 L907.4 246.4 L907.2 248.6 L905.9 250.5 L904.3 252.1 L903.6 254.0 L903.2 256.2 L902.1 258.0 L900.7 259.6 L899.3 261.2 L897.5 262.6 L896.0 264.2 L895.7 266.7 L895.6 268.9 L894.7 270.8 L893.4 272.6 L892.7 274.6 L892.0 276.7 L891.5 278.8 L891.5 281.2 L891.0 283.3 L889.3 285.0 L887.8 286.7 L887.1 288.8 L886.6 291.0 L885.8 293.0 L885.1 295.0 L884.0 296.8 L882.3 298.3 L881.2 300.2 L881.1 302.6 L880.7 304.8 L879.6 306.6 L878.6 308.3 L877.7 309.9 L876.8 311.4 L875.6 314.5 L874.7 316.9 L873.8 318.5 M739.4 361.8 L740.8 362.1 L742.8 362.1 L745.2 362.0 L747.8 362.1 L750.5 362.2 L753.1 362.3 L754.9 363.3 L756.6 364.3 L758.6 364.5 L760.7 364.4 L762.6 365.0 L764.6 365.7 L766.6 366.3 L768.7 367.1 L770.6 368.3 L772.8 368.6 L775.0 368.2 L777.3 367.9 L779.6 368.0 L781.8 367.9 L783.9 367.9 L786.0 368.5 L788.1 368.7 L790.5 367.7 L792.6 366.4 L794.5 365.4 L796.4 364.3 L798.3 363.3 L800.7 362.9 L802.7 363.0 L804.6 362.3 L806.4 361.1 L808.3 360.1 L810.2 359.3 L812.1 358.1 L814.1 357.4 L816.3 357.2 L818.4 356.6 L820.2 355.2 L822.0 353.7 L823.9 352.6 L825.8 351.3 L827.7 350.1 L830.0 349.8 L832.3 349.6 L834.5 348.5 L836.3 347.1 L838.2 345.8 L840.1 344.5 L841.8 343.0 L843.8 342.1 L846.2 341.7 L848.3 341.0 L850.0 339.5 L851.7 338.1 L853.4 336.7 L854.8 334.9 L856.3 333.3 L858.1 332.5 L860.1 331.3 L861.5 329.5 L862.8 327.6 L864.1 326.0 L865.4 324.5 L866.8 323.3 L869.7 321.9 L872.2 321.1 L873.8 320.4 M739.4 361.8 L740.9 361.8 L742.8 362.2 L745.0 363.1 L747.5 363.9 L750.0 364.6 L752.5 365.4 L754.4 365.4 L756.2 366.0 L757.9 367.4 L759.9 368.0 L762.1 367.4 L764.3 367.1 L766.5 366.9 L768.7 366.7 L770.7 367.0 L772.9 367.5 L775.1 366.7 L777.4 365.7 L779.6 365.8 L781.7 366.1 L783.9 366.4 L785.9 367.0 L787.8 367.0 L790.0 365.8 L792.0 365.0 L794.3 365.1 L796.6 364.8 L798.6 364.0 L800.8 363.3 L802.5 362.3 L804.2 361.1 L806.3 361.0 L808.6 361.4 L810.7 360.8 L812.6 359.8 L814.6 358.9 L816.5 357.8 L818.5 357.0 L821.0 356.9 L823.2 356.3 L824.9 354.5 L826.6 352.8 L828.5 351.6 L830.3 350.3 L832.2 349.4 L834.4 348.4 L835.9 346.5 L836.9 344.1 L838.6 342.6 L840.6 341.6 L842.6 340.4 L844.7 339.5 L846.7 338.5 L848.4 336.9 L850.2 335.8 L852.7 335.7 L855.1 335.5 L857.1 334.6 L858.9 333.6 L860.6 332.0 L862.0 330.1 L863.9 328.9 L865.7 327.8 L866.8 326.2 L867.6 324.5 L870.0 322.5 L872.2 321.1 L873.8 320.4 M873.8 319.4 L875.4 319.7 L877.7 320.2 L880.4 320.8 L883.3 321.0 L885.4 321.0 L887.5 321.2 L889.6 321.6 L891.7 322.3 L893.8 323.7 L896.0 324.8 L897.9 324.7 L899.9 324.3 L901.9 324.5 L903.8 325.1 L905.9 325.5 L907.9 326.1 L909.9 326.8 L911.9 326.8 L914.0 326.1 L916.1 326.0 L918.0 326.8 L919.9 327.7 L921.9 328.1 L924.0 328.5 L926.0 328.6 L928.0 328.2 L929.9 327.7 L932.0 328.0 L934.1 328.8 L936.3 329.0 L938.3 328.5 L940.2 328.1 L942.1 327.7 L943.8 327.3 L946.6 327.3 L949.2 327.7 L951.6 327.7 L953.6 327.5 L955.0 327.4 M873.8 319.4 L875.0 320.0 L876.7 320.6 L878.9 321.1 L881.2 321.6 L883.4 322.5 L885.2 323.5 L887.2 324.2 L889.4 324.8 L891.5 325.6 L893.7 326.4 L895.9 326.6 L898.2 326.3 L900.5 326.1 L902.7 326.5 L904.7 327.3 L906.8 328.0 L908.9 328.5 L911.0 329.3 L913.0 330.2 L915.1 330.9 L917.4 331.1 L919.6 331.0 L921.7 331.3 L923.7 332.1 L925.8 332.9 L927.9 333.3 L930.0 333.8 L932.0 334.4 L934.1 335.0 L936.3 335.2 L938.7 334.9 L941.1 334.9 L943.3 335.4 L945.2 336.2 L947.1 336.8 L949.6 337.7 L951.8 338.7 L953.7 339.6 L955.0 340.1 M846.7 379.9 L847.8 378.9 L849.3 377.7 L851.1 376.2 L853.0 374.4 L854.8 372.5 L856.1 370.2 L857.4 368.3 L859.4 367.0 L861.6 365.9 L863.1 364.2 L864.2 362.1 L865.5 360.4 L866.7 358.8 L868.0 356.9 L869.5 354.9 L870.8 352.7 L871.4 350.5 L871.7 348.5 L872.2 347.1 M988.2 200.0 L989.2 201.0 L990.5 202.2 L992.4 203.4 L994.5 204.6 L996.5 206.3 L998.6 208.1 L1000.9 209.7 L1002.2 210.9 L1003.8 212.1 L1005.8 212.7 L1008.1 213.1 L1009.9 214.2 L1011.4 216.0 L1012.9 217.7 L1014.6 219.0 L1016.3 220.4 L1018.1 221.6 L1020.1 222.3 L1022.2 223.0 L1023.9 224.5 L1025.4 226.3 L1027.2 227.5 L1029.3 228.1 L1031.4 228.8 L1033.4 229.3 L1035.6 229.6 L1037.7 230.1 L1039.4 231.4 L1041.0 232.8 L1042.9 233.5 L1045.1 233.7 L1047.0 234.3 L1048.9 235.0 L1050.8 235.6 L1052.6 236.6 L1054.3 238.0 L1056.1 239.1 L1058.1 239.1 L1060.4 238.7 L1062.7 238.8 L1065.0 239.0 L1067.3 239.1 L1069.5 239.3 L1071.7 239.7 L1073.8 239.7 L1075.8 239.0 L1077.7 238.6 L1080.3 239.7 L1082.0 241.4 L1083.4 242.9 L1084.9 244.1 L1086.9 245.2 L1088.9 245.1 L1090.9 244.1 L1093.0 243.4 L1095.4 243.5 L1097.6 243.9 L1099.6 243.9 L1101.6 244.1 L1103.6 244.7 L1105.9 245.1 L1108.3 245.4 L1110.4 246.2 L1112.5 247.5 L1114.5 248.2 L1116.8 248.0 L1119.1 247.6 L1121.4 247.4 L1123.8 247.2 L1126.1 247.1 L1128.3 247.8 L1130.5 249.0 L1132.8 249.5 L1135.3 249.3 L1137.6 249.3 L1139.7 249.7 L1141.4 250.1 L1142.7 250.3 M1141.1 252.5 L1140.0 253.2 L1138.7 254.3 L1137.1 255.6 L1135.5 257.1 L1134.1 259.1 L1132.6 261.2 L1130.6 262.6 L1128.5 263.8 L1127.0 265.1 L1125.4 266.3 L1123.7 267.4 L1122.3 269.0 L1121.1 270.8 L1119.5 272.2 L1117.5 273.1 L1115.7 274.2 L1113.9 275.1 L1111.8 275.5 L1109.9 276.5 L1108.5 278.3 L1107.0 279.8 L1105.3 281.1 L1103.7 282.5 L1102.1 283.8 L1100.1 284.4 L1098.1 284.8 L1096.4 285.9 L1094.6 287.0 L1092.6 287.6 L1090.7 288.5 L1088.8 289.5 L1086.8 289.7 L1084.6 289.3 L1082.4 289.6 L1080.3 290.3 L1078.3 290.9 L1076.5 292.0 L1075.2 293.8 L1073.8 295.5 L1071.9 296.7 L1070.1 298.0 L1068.4 299.4 L1066.4 300.4 L1064.3 301.3 L1062.8 302.8 L1061.3 304.6 L1059.4 305.7 L1057.5 306.8 L1055.6 308.0 L1053.4 308.6 L1051.0 308.6 L1048.9 309.2 L1047.1 310.2 L1045.3 311.0 L1043.2 312.0 L1041.4 313.4 L1039.5 314.4 L1037.3 314.6 L1035.2 314.9 L1033.3 315.8 L1031.4 316.5 L1029.4 317.3 L1027.7 318.9 L1026.1 320.5 L1024.1 321.5 L1022.0 322.0 L1019.9 322.8 L1017.8 323.2 L1015.5 323.2 L1013.6 323.6 L1011.7 324.6 L1009.7 325.0 L1007.7 325.0 L1005.7 325.2 L1003.7 325.2 L1001.7 324.6 L999.6 324.3 L997.6 325.0 L995.7 325.9 L993.8 326.6 L992.0 327.8 L990.2 329.1 L988.1 329.5 L985.9 329.5 L983.9 329.8 L981.9 330.0 L979.6 329.9 L977.3 330.1 L975.0 330.8 L972.7 330.9 L970.5 330.2 L968.2 329.8 L966.0 329.5 L963.9 328.7 L961.7 328.3 L959.3 328.8 L957.0 329.2 L954.8 329.0 L952.8 328.8 L951.2 328.6 L950.0 328.3 M1134.7 286.0 L1133.5 286.6 L1131.9 287.5 L1130.2 289.0 L1128.4 290.6 L1126.1 291.7 L1123.7 292.4 L1121.9 293.8 L1120.4 295.5 L1118.7 297.0 L1116.9 298.5 L1115.0 299.8 L1112.9 300.5 L1110.7 300.8 L1109.0 301.3 L1106.7 302.7 L1104.5 303.4 L1102.2 303.1 L1099.5 303.0 L1097.7 303.4 L1095.9 304.1 L1094.0 305.1 L1092.4 306.6 L1090.8 308.2 L1088.9 309.2 L1086.7 309.5 L1084.8 310.1 L1083.3 311.6 L1082.0 313.3 L1080.3 314.5 L1078.4 315.4 L1076.5 316.2 L1074.3 316.5 L1072.3 316.5 L1070.4 317.2 L1068.4 318.3 L1066.4 318.7 L1064.2 318.1 L1062.0 317.7 L1059.9 318.1 L1058.0 318.8 L1056.1 319.9 L1054.4 321.4 L1052.9 322.9 L1050.9 323.8 L1048.7 324.4 L1047.0 325.6 L1045.5 327.4 L1043.9 328.7 L1041.9 329.1 L1039.9 329.2 L1037.8 329.4 L1035.7 329.4 L1033.7 329.7 L1031.8 330.7 L1030.0 331.8 L1027.9 332.1 L1025.6 331.9 L1023.4 332.3 L1021.5 333.4 L1019.6 334.5 L1017.7 335.4 L1015.7 336.3 L1013.6 336.8 L1011.4 336.7 L1009.3 336.8 L1007.4 337.9 L1005.6 339.4 L1003.6 340.1 L1001.5 339.9 L999.6 339.9 L997.8 340.0 L995.5 339.9 L993.4 339.7 L991.2 339.6 L989.2 339.1 L987.4 337.9 L985.1 336.6 L983.2 336.6 L981.2 337.2 L979.1 337.6 L976.8 337.6 L974.5 337.6 L972.2 337.4 L970.0 337.0 L967.8 337.1 L965.9 338.1 L963.7 339.1 L961.4 339.1 L959.0 338.7 L956.7 339.0 L954.6 339.5 L952.8 339.9 L951.2 340.1 L950.0 340.1 M520.6 487.7 L521.6 486.9 L523.0 485.7 L524.7 484.3 L526.4 482.7 L528.3 481.3 L530.6 480.5 L532.6 479.6 L534.3 478.1 L536.2 477.0 L537.9 475.7 L539.2 473.8 L540.6 472.2 L542.6 471.0 L544.1 469.7 L545.6 468.3 L547.6 467.3 L549.3 466.0 L550.4 464.2 L551.5 462.5 L552.7 460.9 L553.3 458.7 L553.9 456.8 L555.2 455.3 L556.4 453.7 L557.5 452.0 L559.3 450.7 L560.9 449.6 L562.0 447.9 L563.3 446.2 L564.9 444.9 L566.2 443.3 L567.5 441.6 L569.4 440.6 L571.3 439.7 L572.9 438.3 L574.6 437.1 L576.3 435.9 L577.4 434.1 L578.2 432.0 L579.3 430.4 L580.4 428.4 L581.1 426.2 L582.4 424.3 L584.1 422.6 L585.1 420.6 L586.1 418.7 L587.5 417.0 L588.3 415.1 L588.8 413.0 L590.0 411.4 L591.4 410.0 L592.6 408.4 L594.6 406.9 L597.0 406.0 L598.9 404.6 L600.5 402.7 L602.1 400.8 L603.0 398.8 L603.1 396.5 L603.6 394.5 L604.6 392.6 L605.3 390.5 L606.2 388.4 L607.5 386.6 L608.4 384.5 L609.0 382.0 L609.8 379.8 L610.7 377.8 L611.4 376.2 L612.1 375.0 M512.2 465.8 L513.5 465.9 L515.2 465.8 L517.3 465.9 L519.5 466.4 L522.0 466.7 L524.4 466.0 L526.9 465.3 L529.1 465.4 L531.2 466.1 L533.2 466.8 L535.3 467.2 L537.4 467.5 L539.5 467.5 L541.6 467.4 L543.7 467.5 L545.9 468.0 L548.0 468.6 L550.2 468.3 L552.2 467.1 L554.1 465.8 L556.3 465.5 L558.5 465.9 L560.6 466.1 L562.7 465.7 L564.9 465.4 L567.2 465.6 L569.4 466.2 L571.6 467.1 L573.6 468.1 L575.6 469.1 L577.6 469.4 L579.5 468.8 L581.8 467.8 L583.9 467.3 L586.1 466.9 L587.9 466.0 L589.7 464.4 L591.5 462.9 L593.6 462.1 L596.0 462.0 L598.4 461.9 L600.7 461.4 L603.0 460.7 L604.9 459.8 L606.7 458.6 L608.6 457.6 L610.8 457.0 L613.2 456.8 L615.1 456.1 L616.7 454.6 L618.7 453.1 L620.9 452.5 L623.3 452.8 L625.6 452.6 L627.8 451.7 L629.8 450.3 L631.5 449.0 L633.3 447.8 L635.3 446.8 L637.5 445.9 L639.8 445.0 L641.8 443.9 L643.4 442.3 L645.2 440.9 L647.4 440.3 L649.8 440.2 L651.9 439.7 L653.6 438.2 L655.0 436.4 L656.6 435.1 L658.5 434.0 L660.3 432.7 L661.9 431.3 L663.4 429.8 L664.9 428.2 L666.5 426.5 L668.3 425.3 L670.5 424.9 L672.9 425.0 L675.2 424.6 L677.0 423.2 L678.6 421.5 L680.3 420.3 L682.4 419.4 L684.2 418.2 L685.3 416.3 L686.1 414.2 L687.1 412.1 L688.3 410.1 L689.9 408.1 L691.5 406.9 L693.3 405.8 L694.8 404.3 L696.0 402.2 L697.2 400.2 L699.0 398.9 L701.4 398.1 L703.3 397.1 L704.4 395.4 L705.1 393.6 L706.8 391.6 L708.6 390.1 L710.2 388.9 L711.6 387.6 L712.9 386.3 L714.0 385.0 L715.8 383.2 L717.8 381.7 L719.6 380.8 L720.8 380.0 M529.0 511.3 L530.5 511.8 L532.4 512.4 L534.8 513.2 L537.3 514.1 L540.0 514.5 L542.6 514.3 L544.9 514.7 L547.1 515.4 L549.4 515.7 L551.5 516.7 L553.6 517.8 L555.9 518.1 L558.2 518.0 L560.5 518.2 L562.7 518.1 L565.0 517.8 L567.3 518.4 L569.4 519.6 L571.6 520.4 L573.8 521.2 L575.9 522.4 L578.2 522.9 L580.6 522.7 L582.9 523.0 L585.1 523.4 L587.5 523.4 L589.8 523.7 L592.1 524.4 L594.3 524.3 L596.4 523.5 L598.5 523.0 L600.3 522.3 L601.9 521.1 L603.9 520.6 L606.4 520.9 L608.2 521.0 L610.2 521.0 L612.4 521.5 L614.6 521.5 L616.9 520.8 L619.1 520.6 L621.2 520.8 L623.2 520.7 L625.6 520.8 L628.1 521.4 L630.4 521.5 L632.5 520.8 L634.6 520.2 L636.8 519.6 L638.6 518.4 L640.4 517.6 L642.5 517.5 L644.6 517.1 L646.5 516.3 L648.5 516.0 L650.4 515.4 L652.4 513.9 L654.5 512.8 L656.7 512.3 L658.9 511.6 L661.1 510.9 L663.5 511.0 L665.6 510.9 L667.5 510.1 L669.3 509.3 L671.3 508.7 L673.0 507.5 L674.8 506.4 L676.9 506.0 L678.9 505.5 L680.7 504.4 L682.7 503.5 L684.6 502.4 L685.9 500.6 L687.2 498.7 L688.9 497.4 L690.5 496.1 L692.1 494.8 L694.2 494.2 L696.2 493.7 L697.8 492.4 L699.5 491.1 L701.2 490.0 L702.8 488.3 L704.3 486.6 L706.1 485.7 L708.2 484.9 L710.0 483.6 L712.0 482.6 L714.2 481.6 L715.8 480.0 L717.2 478.2 L718.9 476.9 L720.7 475.7 L722.4 474.3 L724.5 473.5 L726.6 472.9 L728.3 471.7 L729.8 470.3 L731.4 469.1 L732.8 467.4 L734.0 465.5 L735.7 464.3 L737.7 463.3 L739.6 461.9 L741.5 460.6 L743.5 459.4 L745.0 458.0 L746.3 456.6 L747.7 455.7 L748.7 455.1 M655.2 565.1 L656.4 564.1 L658.1 562.7 L659.9 560.7 L661.8 558.7 L663.4 556.5 L664.3 554.7 L666.0 553.5 L668.0 552.5 L669.4 550.9 L670.6 549.1 L671.9 547.5 L673.0 545.7 L674.5 544.0 L676.7 543.4 L678.8 543.0 L680.4 541.8 L681.9 540.6 L683.2 539.3 L684.1 537.6 L685.3 536.0 L687.3 534.8 L689.0 533.4 L690.1 531.7 L691.2 530.3 L692.9 528.4 L694.2 526.5 L696.1 525.2 L698.4 524.6 L700.1 523.7 L701.5 522.5 L703.3 521.0 L705.5 518.6 L706.2 516.9 L707.6 515.8 L709.5 514.9 L710.9 513.3 L712.1 511.4 L713.5 509.6 L714.7 507.5 L716.0 505.6 L718.0 504.6 L720.1 503.8 L721.5 502.4 L723.0 501.2 L724.4 500.1 L725.5 498.7 L727.0 497.6 L729.2 497.2 L731.2 496.2 L732.6 494.4 L734.0 492.4 L735.3 490.0 L735.6 488.2 L736.6 486.6 L738.2 485.1 L739.2 483.1 L739.7 480.8 L740.4 478.5 L740.7 475.9 L740.8 473.3 L742.0 471.1 L743.5 469.1 L744.3 466.9 L744.8 464.6 L745.5 462.6 L745.9 460.5 L746.5 458.8 L747.5 457.4 L748.3 456.2 L748.7 455.1 M655.2 565.1 L656.2 563.9 L657.6 562.1 L659.3 560.2 L661.3 558.3 L663.3 556.4 L664.9 555.3 L667.0 554.5 L669.3 553.7 L671.0 552.4 L672.2 550.7 L673.3 549.0 L674.5 547.6 L676.0 546.1 L677.4 544.6 L679.0 543.3 L680.9 542.5 L682.7 541.6 L683.9 539.9 L684.5 537.9 L685.1 535.9 L686.0 534.0 L687.0 532.2 L688.0 530.3 L689.5 528.9 L691.9 527.5 L694.0 526.3 L695.6 524.7 L697.1 522.9 L698.8 521.7 L700.5 520.8 L702.4 519.7 L704.9 517.9 L706.5 517.3 L708.4 516.8 L710.1 515.8 L711.5 514.1 L712.9 512.3 L714.5 510.7 L716.2 509.2 L717.8 507.6 L719.4 506.1 L721.3 505.0 L723.1 504.1 L724.3 502.7 L725.2 500.9 L726.0 499.2 L727.1 497.7 L728.1 496.2 L729.0 494.4 L730.3 492.8 L732.1 491.2 L733.8 489.1 L734.5 487.6 L734.9 485.7 L735.7 483.9 L736.9 482.0 L738.1 480.1 L739.3 478.0 L741.0 476.1 L743.0 474.2 L744.5 472.1 L745.2 469.8 L745.6 467.4 L746.2 465.2 L746.6 463.0 L746.9 460.9 L747.3 459.1 L747.9 457.5 L748.4 456.2 L748.7 455.1 M739.7 361.5 L739.8 362.9 L739.8 364.8 L740.0 367.0 L740.9 369.5 L741.6 372.1 L741.7 374.9 L741.4 376.7 L741.3 378.6 L741.1 380.5 L741.5 382.5 L742.3 384.6 L742.3 386.7 L741.3 388.9 L740.6 391.1 L740.8 393.2 L741.1 395.3 L741.3 397.3 L741.6 399.3 L741.5 401.4 L740.8 403.6 L740.7 405.6 L741.8 407.6 L743.0 409.4 L743.4 411.4 L743.5 413.5 L743.9 415.5 L744.2 417.5 L744.9 419.5 L746.3 421.4 L747.5 423.3 L747.5 425.4 L747.1 427.5 L747.4 429.5 L748.2 431.5 L748.7 433.4 L749.1 435.4 L749.3 437.6 L748.7 440.0 L747.9 442.5 L748.0 444.9 L748.7 447.2 L748.7 449.3 L748.5 451.2 L748.5 452.8 L748.7 454.1 M739.7 361.5 L739.4 362.9 L739.2 364.8 L739.5 367.0 L739.9 369.5 L740.1 372.2 L740.0 375.0 L739.9 376.8 L740.1 378.6 L740.3 380.6 L740.7 382.6 L741.3 384.7 L742.1 386.7 L742.4 388.8 L742.1 391.0 L741.7 393.2 L741.9 395.2 L742.9 397.1 L744.0 399.0 L744.5 401.0 L744.5 403.1 L744.5 405.1 L744.5 407.2 L744.4 409.2 L744.4 411.3 L744.7 413.3 L745.3 415.3 L745.5 417.3 L744.9 419.5 L744.0 421.7 L743.5 423.8 L743.9 425.8 L744.6 427.8 L745.1 429.8 L745.3 431.8 L745.5 433.8 L745.8 435.7 L746.1 437.9 L746.5 440.2 L747.3 442.6 L748.5 444.9 L749.2 447.1 L749.3 449.3 L748.9 451.2 L748.8 452.8 L748.7 454.1 M748.7 455.1 L749.0 456.3 L749.3 457.9 L749.6 459.8 L749.9 461.9 L750.5 464.2 L750.6 466.6 L749.7 469.1 L749.0 471.6 L748.9 473.9 L748.8 476.1 L748.7 478.1 L749.2 480.1 L750.0 482.1 L750.1 484.1 L749.7 486.2 L749.7 488.2 L750.0 490.2 L750.1 492.3 L750.5 494.3 L751.6 496.2 L752.9 498.1 L753.3 500.1 L753.5 502.1 L753.8 504.1 L754.2 506.2 L754.2 508.2 L754.6 510.3 L755.7 512.1 L756.6 514.1 L756.8 516.1 L756.8 518.2 L757.0 520.3 L756.8 522.3 L756.3 524.4 L756.4 526.4 L757.2 528.4 L757.8 530.4 L757.8 532.4 L758.0 534.4 L758.1 536.4 L757.6 538.6 L757.0 540.8 L757.1 543.0 L757.8 545.2 L758.1 547.3 L758.1 549.5 L758.3 551.5 L758.3 553.4 L757.8 555.2 L757.6 556.9 L758.3 560.0 L759.3 562.3 L760.0 563.9 L760.5 565.1 M748.7 455.1 L748.6 456.3 L748.6 458.0 L748.8 459.9 L749.1 462.0 L750.1 464.2 L751.0 466.5 L750.8 469.0 L750.7 471.4 L750.9 473.7 L750.8 475.9 L750.9 478.0 L751.9 479.9 L752.4 481.9 L752.2 484.0 L752.2 486.0 L752.1 488.0 L751.5 490.1 L751.4 492.1 L752.3 494.1 L752.8 496.0 L753.0 498.1 L753.6 500.0 L753.6 502.1 L753.0 504.3 L752.9 506.4 L753.4 508.4 L753.6 510.4 L754.0 512.4 L754.8 514.4 L754.8 516.4 L754.2 518.5 L754.1 520.5 L754.3 522.5 L754.3 524.6 L755.0 526.5 L756.3 528.4 L756.9 530.4 L757.0 532.5 L757.5 534.4 L757.7 536.5 L757.6 538.6 L758.4 540.7 L759.5 542.8 L760.0 545.0 L760.2 547.2 L760.5 549.3 L760.0 551.4 L759.1 553.4 L758.9 555.1 L759.1 556.7 L759.3 559.8 L759.8 562.2 L760.3 563.9 L760.5 565.1 M738.6 362.2 L737.6 363.2 L736.3 364.4 L734.7 365.9 L732.8 367.5 L730.3 368.5 L727.9 369.6 L726.2 371.5 L724.5 373.1 L723.2 374.7 L721.9 377.0 L720.6 378.9 L718.8 380.2 L717.3 381.6 L716.4 383.4 L715.1 385.1 L713.8 386.8 L712.7 388.8 L711.2 390.3 L709.0 391.0 L706.8 391.9 L704.9 393.3 L703.0 394.3 L701.2 395.7 L699.7 397.7 L697.8 399.3 L695.7 400.4 L693.9 401.6 L692.5 402.7 L691.5 403.6 M740.0 362.2 L740.9 363.3 L742.0 364.8 L743.0 366.8 L744.2 368.9 L746.0 370.8 L747.8 372.7 L749.0 374.8 L750.1 376.6 L751.1 378.3 L751.6 380.5 L752.4 382.5 L754.0 383.9 L755.9 385.2 L757.4 386.7 L759.1 388.2 L760.8 389.4 L761.9 391.2 L762.9 393.1 L764.5 394.5 L766.4 395.6 L768.0 397.1 L769.7 398.4 L771.4 399.8 L772.5 401.7 L773.3 403.9 L774.5 405.6 L776.1 407.0 L777.6 408.4 L779.3 409.7 L781.3 410.6 L782.8 412.1 L784.0 414.0 L785.5 415.7 L787.3 416.8 L788.9 418.1 L790.8 419.4 L793.0 420.2 L794.8 421.5 L796.0 423.5 L797.3 425.4 L799.0 426.9 L800.5 428.4 L802.1 429.6 L804.3 430.1 L806.4 430.5 L808.0 431.6 L809.7 432.7 L811.6 433.3 L813.4 434.1 L815.2 434.8 L817.5 434.7 L819.8 434.5 L821.7 435.2 L823.6 436.3 L825.6 437.1 L827.6 438.4 L829.5 439.8 L831.7 440.3 L834.0 440.3 L836.0 441.0 L837.8 441.9 L839.5 442.5 L842.1 443.6 L844.3 444.8 L846.5 445.1 L848.8 444.6 L851.0 444.6 L853.2 445.0 L855.4 445.3 L857.5 446.2 L859.5 447.6 L861.6 448.4 L863.7 448.8 L865.3 449.3 L866.5 449.7 M849.7 375.0 L849.1 376.2 L848.4 377.9 L847.7 380.0 L847.1 382.4 L845.9 384.6 L844.0 386.4 L842.8 388.4 L841.8 390.4 L840.6 392.4 L839.6 394.5 L838.7 396.7 L837.0 398.4 L835.0 399.6 L833.5 401.2 L832.6 403.3 L831.6 405.3 L830.6 407.1 L829.7 409.1 L828.3 410.8 L826.1 411.9 L824.4 413.0 L823.1 414.7 L821.6 416.4 L819.9 417.9 L818.3 419.4 L816.5 420.6 L814.2 421.0 L812.2 421.4 L810.5 422.9 L809.0 424.3 L807.5 425.4 L806.0 426.5 L804.5 427.7 L802.3 428.4 L800.2 428.9 L798.6 430.4 L797.2 432.3 L795.5 433.9 L793.7 435.4 L791.7 436.9 L789.4 437.8 L787.3 438.0 L785.4 439.0 L783.8 440.5 L782.0 441.7 L780.0 442.5 L778.0 443.4 L775.9 443.9 L773.6 443.9 L771.7 444.5 L769.9 446.1 L768.1 447.6 L766.1 448.5 L764.2 449.5 L762.4 450.3 L760.4 450.6 L758.6 451.2 L756.5 452.7 L754.2 453.9 L752.0 454.4 L750.1 454.8 L748.7 455.1 M748.7 455.8 L750.0 456.1 L751.7 456.6 L753.8 457.0 L756.2 456.9 L758.7 456.9 L761.1 457.3 L763.6 457.7 L765.8 458.3 L767.7 459.5 L769.7 460.5 L771.9 460.6 L774.0 460.9 L776.1 461.4 L778.3 461.6 L780.4 462.0 L782.4 463.3 L784.3 464.6 L786.4 465.2 L788.6 465.8 L790.7 466.5 L793.0 466.4 L795.3 466.2 L797.3 466.8 L799.2 467.6 L801.6 468.2 L803.8 468.9 L805.8 469.9 L808.0 469.9 L810.3 469.2 L812.6 468.9 L814.5 468.8 L816.4 468.2 L818.5 468.0 L820.9 468.3 L823.2 467.9 L825.2 467.0 L827.4 466.3 L829.5 465.8 L831.5 465.0 L833.7 464.7 L836.0 465.3 L838.2 465.6 L840.4 465.3 L842.5 465.2 L844.6 464.7 L846.4 463.4 L848.3 461.9 L850.4 461.1 L852.6 460.1 L854.5 458.8 L856.5 458.0 L858.4 457.1 L859.8 455.8 L862.3 454.1 L864.7 453.0 L866.7 452.2 L868.2 451.7 M748.7 455.8 L749.3 457.0 L750.0 458.6 L750.6 460.6 L751.2 462.9 L752.4 465.1 L754.1 467.1 L755.8 469.0 L756.9 470.7 L758.2 472.3 L759.6 474.0 L760.5 476.0 L761.0 478.3 L761.8 480.5 L763.0 482.4 L764.4 484.2 L765.4 486.1 L766.6 488.0 L768.0 489.7 L769.2 491.5 L769.9 493.6 L770.4 495.8 L771.5 497.8 L772.8 499.5 L774.1 501.3 L775.3 503.1 L777.0 504.6 L778.8 506.1 L780.1 507.9 L780.9 510.1 L781.6 512.2 L782.6 514.2 L783.5 516.2 L784.2 518.2 L785.2 520.0 L786.9 521.6 L788.5 523.1 L789.7 524.9 L790.6 526.8 L791.8 528.4 L793.0 530.1 L794.0 532.0 L795.0 533.8 L796.6 535.2 L798.5 536.4 L800.1 537.8 L801.4 539.4 L802.7 541.0 L804.1 542.6 L805.1 544.5 L805.9 546.7 L806.9 548.6 L808.5 550.1 L810.3 551.5 L812.0 553.2 L813.7 554.8 L815.5 556.1 L817.1 557.5 L818.1 559.1 L819.1 560.4 L821.7 562.8 L823.4 564.2 L824.4 565.1 M872.2 346.4 L872.2 347.6 L872.2 349.1 L872.7 350.8 L873.2 352.7 L873.7 354.8 L874.5 357.1 L874.7 359.4 L874.1 361.8 L873.4 364.2 L873.4 366.6 L873.3 368.9 L872.9 371.1 L872.9 373.2 L873.0 375.0 L872.4 377.4 L871.3 379.5 L870.5 381.6 L869.9 383.5 L869.2 385.4 L868.8 387.3 L869.4 389.2 L869.9 391.2 L869.8 393.1 L869.8 395.1 L870.0 397.2 L869.6 399.2 L868.9 401.2 L869.1 403.2 L869.6 405.3 L869.8 407.3 L870.0 409.3 L870.5 411.4 L870.7 413.4 L870.0 415.4 L869.7 417.4 L870.0 419.5 L870.1 421.6 L870.2 423.7 L871.0 425.8 L871.9 427.9 L871.9 430.0 L871.5 431.9 L871.3 433.8 L870.8 435.6 L869.7 438.0 L869.2 440.2 L869.3 442.3 L869.0 444.3 L868.4 446.3 L868.1 448.4 L867.8 450.7 L866.8 452.6 L866.0 454.6 L866.1 456.7 L866.4 458.8 L866.5 460.9 L867.1 463.1 L867.9 465.1 L868.0 467.2 L867.5 469.2 L867.2 471.4 L867.0 473.9 L866.6 476.3 L866.5 478.7 L866.8 481.0 L866.9 483.1 L866.7 484.8 L866.5 486.0 M872.2 346.4 L872.2 347.6 L872.2 349.1 L872.3 350.8 L872.4 352.7 L872.3 354.8 L871.8 357.1 L871.2 359.4 L871.0 361.8 L871.3 364.2 L871.9 366.6 L871.8 368.9 L870.9 371.1 L870.1 373.1 L870.2 374.9 L871.2 377.3 L871.8 379.6 L871.5 381.6 L870.8 383.6 L870.6 385.5 L871.2 387.5 L872.1 389.5 L872.4 391.4 L872.4 393.3 L872.1 395.3 L872.0 397.3 L872.0 399.3 L872.2 401.3 L872.4 403.3 L872.3 405.3 L871.5 407.3 L870.4 409.3 L869.6 411.3 L869.7 413.4 L870.0 415.4 L869.6 417.4 L868.4 419.5 L867.3 421.5 L867.3 423.6 L868.0 425.7 L868.5 427.8 L868.3 429.8 L867.7 431.8 L867.6 433.7 L868.0 435.5 L868.6 437.9 L869.0 440.2 L869.0 442.3 L868.9 444.3 L868.5 446.3 L868.3 448.4 L868.6 450.7 L869.3 452.6 L869.7 454.6 L869.4 456.7 L868.6 458.8 L868.4 460.9 L869.1 463.0 L870.0 465.2 L870.1 467.3 L869.2 469.3 L868.3 471.5 L868.1 474.0 L868.3 476.5 L868.1 478.9 L867.5 481.1 L866.8 483.1 L866.5 484.7 L866.5 486.0 M872.2 346.4 L871.9 347.6 L871.7 349.1 L871.7 350.8 L871.7 352.7 L872.1 354.9 L873.0 357.1 L873.6 359.4 L873.5 361.8 L873.0 364.2 L872.8 366.6 L872.9 368.9 L872.7 371.1 L872.5 373.2 L872.9 375.0 L873.6 377.4 L873.9 379.7 L873.5 381.8 L872.8 383.8 L872.4 385.7 L871.9 387.6 L870.9 389.4 L870.2 391.2 L870.0 393.2 L870.2 395.2 L869.9 397.2 L869.3 399.2 L868.8 401.2 L868.6 403.2 L868.2 405.2 L867.6 407.2 L867.6 409.3 L868.4 411.3 L869.4 413.3 L870.1 415.4 L870.5 417.4 L871.1 419.5 L871.5 421.6 L871.3 423.7 L870.6 425.8 L870.4 427.9 L870.6 429.9 L870.8 431.9 L870.6 433.8 L870.4 435.6 L870.3 438.0 L870.0 440.2 L869.1 442.3 L868.0 444.2 L867.5 446.2 L867.5 448.4 L867.5 450.7 L867.4 452.6 L867.6 454.6 L868.0 456.7 L868.1 458.8 L867.4 460.9 L866.7 463.1 L866.5 465.1 L866.6 467.2 L866.5 469.1 L866.6 471.4 L867.1 473.9 L867.8 476.4 L867.9 478.8 L867.5 481.1 L867.1 483.1 L866.8 484.8 L866.5 486.0 M866.5 487.7 L866.2 489.0 L866.2 490.7 L866.0 492.7 L865.3 494.9 L864.9 497.4 L865.2 499.9 L865.7 502.5 L866.3 505.0 L867.0 507.4 L867.0 509.6 L866.3 511.7 L866.3 513.8 L867.0 515.8 L867.5 517.9 L867.6 519.9 L867.6 521.9 L867.1 523.9 L866.0 525.8 L865.4 527.8 L865.8 529.8 L865.8 531.9 L865.1 533.9 L864.3 536.0 L863.5 538.0 L862.4 540.0 L861.8 542.1 L862.3 544.2 L862.6 546.2 L862.0 548.1 L861.4 549.9 L861.3 552.5 L861.5 555.1 L862.0 557.6 L862.8 559.9 L863.2 562.0 L863.1 563.8 L863.1 565.1 M866.5 487.7 L866.8 489.0 L867.1 490.7 L867.1 492.7 L866.7 495.0 L866.3 497.4 L866.2 499.9 L866.0 502.5 L865.6 505.0 L865.5 507.4 L865.3 509.6 L864.5 511.6 L863.4 513.6 L863.0 515.7 L863.3 517.7 L863.9 519.7 L864.3 521.7 L864.8 523.8 L865.3 525.8 L865.4 527.8 L864.8 529.8 L864.5 531.8 L864.8 533.9 L865.3 536.1 L865.4 538.2 L865.2 540.3 L865.0 542.4 L864.7 544.4 L863.9 546.3 L863.1 548.1 L863.3 550.0 L863.9 552.5 L864.1 555.1 L863.8 557.6 L863.6 559.9 L863.3 562.0 L863.1 563.8 L863.1 565.1 M866.5 487.7 L865.8 489.0 L864.7 490.7 L863.4 492.7 L861.9 494.8 L860.9 497.3 L860.8 500.0 L860.2 501.8 L858.7 503.4 L857.4 505.1 L856.6 507.0 L855.8 508.9 L855.2 510.9 L854.9 513.0 L854.2 514.9 L852.7 516.5 L851.4 518.1 L851.2 520.1 L851.3 522.3 L850.9 524.5 L850.2 526.6 L849.6 528.4 L848.5 530.1 L847.3 531.8 L846.9 533.9 L847.0 536.2 L846.2 538.1 L844.6 539.7 L843.2 541.3 L842.3 542.9 L841.3 545.1 L840.4 547.2 L840.0 549.5 L839.1 551.6 L837.5 553.1 L836.3 554.7 L836.0 556.6 L835.3 559.5 L834.4 561.9 L833.5 563.8 L832.9 565.1 M873.2 348.1 L873.4 349.3 L873.8 350.9 L874.5 352.8 L875.1 354.9 L875.2 357.3 L875.3 359.8 L876.1 362.2 L876.9 364.7 L877.5 367.1 L878.7 369.3 L880.0 371.2 L880.7 373.0 L880.7 374.7 L881.4 377.5 L882.3 379.4 L882.9 381.0 L883.7 382.5 L885.2 383.6 L887.0 384.9 L888.1 386.4 L888.9 388.3 L890.1 390.0 L891.2 391.9 L892.0 394.0 L893.1 395.9 L894.8 397.4 L896.7 398.6 L898.1 400.1 L899.5 401.6 L901.0 403.0 L902.1 404.7 L902.8 406.7 L903.9 408.6 L905.5 410.1 L907.2 411.8 L908.5 413.3 L910.0 414.7 L911.6 416.2 L912.7 418.1 L913.4 420.4 L914.4 422.5 L915.8 424.3 L917.0 426.1 L918.3 427.8 L920.1 429.1 L922.1 430.3 L923.6 432.2 L924.9 434.2 L926.5 435.9 L928.1 437.5 L929.5 439.1 L931.1 440.4 L932.7 441.2 L934.0 442.1 L936.9 445.0 L938.2 446.3 M873.2 348.1 L873.5 349.3 L874.0 350.9 L874.4 352.7 L874.6 354.9 L874.9 357.2 L875.2 359.7 L875.9 362.1 L877.0 364.5 L878.3 366.7 L879.1 369.0 L879.1 371.3 L879.0 373.4 L879.7 375.1 L881.4 377.8 L882.6 379.9 L882.7 381.9 L882.4 383.9 L882.6 386.0 L883.3 388.5 L883.8 390.2 L884.4 392.0 L885.1 393.9 L885.4 396.0 L885.3 398.3 L885.3 400.6 L886.1 402.6 L887.5 404.5 L888.5 406.5 L888.4 408.6 L888.1 410.7 L888.3 412.7 L889.1 414.7 L889.8 416.7 L890.2 418.7 L890.3 420.7 L890.2 422.7 L889.9 424.8 L889.6 426.8 L890.1 428.8 L891.0 430.8 L891.4 432.8 L891.0 435.0 L890.2 437.2 L890.4 439.3 L891.3 441.3 L892.2 443.2 L892.6 445.2 L892.7 447.2 L892.9 449.1 L893.4 451.5 L894.2 453.8 L895.4 455.9 L896.8 457.8 L897.8 459.8 L897.9 462.0 L897.8 464.1 L898.3 465.9 L899.6 468.1 L900.4 470.1 L900.3 471.9 L899.7 473.8 L899.6 476.1 L900.0 478.1 L900.6 480.2 L901.3 482.3 L902.2 484.6 L902.8 486.9 L903.0 489.6 L903.0 491.7 L903.8 493.7 L905.4 495.6 L906.8 497.6 L907.3 499.8 L907.3 502.2 L907.7 504.3 L908.8 506.2 L910.0 508.1 L910.8 510.0 L911.4 512.0 L911.8 513.9 L912.0 516.0 L912.2 518.0 L913.1 519.9 L914.5 521.6 L915.8 523.5 L916.4 525.8 L916.5 528.2 L917.3 530.3 L919.0 531.7 L920.4 533.1 L922.0 535.7 L923.3 538.2 L924.5 540.2 L925.4 541.6 M868.2 450.7 L869.2 451.6 L870.7 452.6 L872.6 453.6 L874.5 455.0 L876.5 456.3 L878.4 457.7 L879.7 459.5 L881.5 460.8 L883.8 461.6 L885.6 462.7 L887.3 464.1 L889.1 465.3 L890.5 467.0 L891.4 469.2 L892.8 470.9 L894.5 472.1 L896.2 473.5 L898.1 474.6 L900.3 475.0 L902.0 475.9 L903.6 477.2 L905.5 477.9 L907.6 478.3 L909.6 478.8 L911.7 478.7 L913.9 478.2 L916.2 478.7 L918.3 479.7 L920.6 480.3 L922.8 481.2 L924.9 482.3 L927.0 482.4 L929.6 482.2 L932.2 482.4 L934.6 482.6 L936.7 482.6 L938.2 482.7 M866.5 487.7 L867.7 487.2 L869.4 486.6 L871.3 485.8 L873.4 484.9 L875.6 483.8 L877.8 483.0 L880.1 483.0 L882.3 483.1 L884.3 482.5 L886.2 481.2 L888.0 479.9 L890.0 479.5 L892.0 479.7 L893.8 479.6 L896.1 478.2 L897.5 476.5 L899.9 475.1 L901.8 474.7 L904.1 474.6 L906.5 474.1 L908.8 473.4 L911.2 472.6 L913.5 471.9 L915.8 471.5 L918.2 471.4 L920.6 471.6 L922.9 471.9 L925.1 471.7 L927.1 471.0 L929.5 470.8 L931.8 471.4 L933.9 472.2 L935.8 472.5 L937.2 472.6 M938.2 446.3 L937.2 447.2 L935.9 448.5 L934.5 450.1 L932.9 451.9 L930.9 453.4 L928.7 454.4 L926.9 455.5 L925.4 457.3 L924.0 459.1 L922.3 460.5 L920.6 461.9 L918.9 463.2 L917.0 464.2 L914.9 464.8 L912.8 465.5 L911.2 466.9 L909.9 468.6 L908.4 469.9 L906.9 470.9 L904.7 472.3 L902.8 473.7 L901.2 475.0 L900.2 475.9" fill="none" stroke="#eef2f6" stroke-width="1.0" stroke-linejoin="round" stroke-linecap="round"/>
<path d="M875.4 317.8 L876.8 318.2 L878.8 318.7 L881.0 319.6 L883.1 321.0 L884.7 322.2 L886.8 322.8 L888.9 323.5 L891.1 324.4 L893.3 325.2 L895.2 326.4 L896.6 328.3 L898.2 330.1 L900.4 331.0 L902.7 331.5 L904.7 332.1 L906.8 332.6 L909.0 333.0 L911.1 334.1 L913.0 335.5 L914.9 336.2 L917.1 336.5 L919.1 337.3 L920.8 338.4 L922.6 339.3 L924.7 340.4 L926.5 341.7 L928.6 342.4 L931.0 342.1 L933.5 341.8 L935.7 342.1 L937.7 342.7 L939.9 343.6 L941.7 345.2 L943.3 346.8 L945.3 347.5 L947.1 347.6 L949.3 347.6 L951.6 347.4 L953.6 346.9 L955.0 346.5 M1125.8 316.2 L1124.5 317.0 L1122.7 318.2 L1120.6 319.5 L1118.1 320.4 L1115.6 321.1 L1113.7 321.8 L1111.5 321.8 L1109.3 322.2 L1107.2 323.2 L1105.1 323.9 L1102.9 324.2 L1100.8 325.0 L1098.6 325.5 L1096.2 325.5 L1094.0 326.1 L1092.0 327.4 L1089.9 328.5 L1088.2 329.8 L1086.9 331.7 L1085.3 333.2 L1083.4 334.2 L1081.5 335.5 L1079.6 336.5 L1077.3 336.8 L1075.3 337.4 L1073.6 338.6 L1071.7 339.5 L1069.9 340.4 L1068.3 341.9 L1066.6 342.8 L1064.6 343.1 L1062.4 343.8 L1060.3 344.5 L1058.1 344.6 L1056.0 345.1 L1054.1 346.3 L1052.0 347.0 L1049.8 347.4 L1047.7 348.0 L1045.5 348.0 L1043.4 347.2 L1041.3 346.8 L1039.1 346.9 L1036.8 346.8 L1034.5 347.3 L1032.6 348.8 L1030.6 349.9 L1028.5 350.6 L1026.5 351.5 L1024.4 351.9 L1022.3 351.3 L1020.3 351.1 L1018.2 351.2 L1016.0 351.0 L1013.7 351.2 L1012.0 352.2 L1010.1 352.8 L1008.1 352.9 L1006.1 353.3 L1004.0 353.4 L1001.7 352.8 L999.7 352.6 L997.7 352.9 L995.8 352.8 L993.8 352.9 L991.8 353.6 L989.7 353.9 L987.8 353.4 L985.8 353.3 L983.8 353.0 L981.9 352.2 L979.9 351.7 L977.8 351.9 L975.8 351.6 L973.7 351.2 L971.7 351.4 L969.7 351.1 L967.8 350.0 L966.0 349.3 L963.8 348.8 L961.5 347.9 L959.1 347.6 L956.7 347.8 L954.6 347.6 L952.9 347.4 L951.6 347.1" fill="none" stroke="#46d9ba" stroke-width="1.0" stroke-linejoin="round" stroke-linecap="round"/>
<path d="M226.4 540.2V550.7" stroke="#22e022" stroke-width="1.2"/><path d="M216.3 550.7H226.4" stroke="#c81e1e" stroke-width="1.2"/><path d="M227.6 550.8L229.2 545.4" stroke="#1c28d8" stroke-width="1.5"/>
<text x="223.6" y="538.2" font-family="Liberation Sans, sans-serif" font-weight="bold" font-size="7.5" fill="#22e022">y</text><text x="211.6" y="549" font-family="Liberation Sans, sans-serif" font-weight="bold" font-size="7.5" fill="#c81e1e">x</text>
</svg>
</div>
<span class="hud" style="left:218.5px;top:34.5px">Verts:</span><span class="hud" style="left:265.8px;width:40px;text-align:right;top:34.5px">10000</span><span class="hud" style="left:314.2px;width:40px;text-align:right;top:34.5px">0</span><span class="hud" style="left:363.8px;width:40px;text-align:right;top:34.5px">0</span>
<span class="hud" style="left:218.5px;top:49.6px">Edges:</span><span class="hud" style="left:265.8px;width:40px;text-align:right;top:49.6px">21600</span><span class="hud" style="left:314.2px;width:40px;text-align:right;top:49.6px">0</span><span class="hud" style="left:363.8px;width:40px;text-align:right;top:49.6px">0</span>
<span class="hud" style="left:218.5px;top:64.7px">Faces:</span><span class="hud" style="left:265.8px;width:40px;text-align:right;top:64.7px">12000</span><span class="hud" style="left:314.2px;width:40px;text-align:right;top:64.7px">0</span><span class="hud" style="left:363.8px;width:40px;text-align:right;top:64.7px">0</span>
<span class="hud" style="left:218.5px;top:79.8px">Tris:</span><span class="hud" style="left:265.8px;width:40px;text-align:right;top:79.8px">19200</span><span class="hud" style="left:314.2px;width:40px;text-align:right;top:79.8px">0</span><span class="hud" style="left:363.8px;width:40px;text-align:right;top:79.8px">0</span>
<span class="hud" style="left:218.5px;top:94.9px">UVs:</span><span class="hud" style="left:265.8px;width:40px;text-align:right;top:94.9px">0</span><span class="hud" style="left:314.2px;width:40px;text-align:right;top:94.9px">0</span><span class="hud" style="left:363.8px;width:40px;text-align:right;top:94.9px">0</span>
<span class="hud" style="left:1033.5px;top:34.4px">Backfaces:</span><span class="hud" style="left:1135.7px;top:34.4px">N/A</span>
<span class="hud" style="left:1033.5px;top:49.5px">Smoothness:</span><span class="hud" style="left:1135.7px;top:49.5px">N/A</span>
<span class="hud" style="left:1033.5px;top:64.7px">Instance:</span><span class="hud" style="left:1135.7px;top:64.7px">No</span>
<span class="hud" style="left:1033.5px;top:79.8px">Display Layer:</span><span class="hud" style="left:1135.7px;top:79.8px">default</span>
<span class="hud" style="left:1033.5px;top:95.0px">Distance From Camera:</span><span class="hud" style="left:1135.7px;top:95.0px">5.333</span>
<span class="hud" style="left:1033.5px;top:110.2px">Selected Objects:</span><span class="hud" style="left:1135.7px;top:110.2px">39</span>

<span class="hud" style="left:690.3px;top:556.5px">persp</span>
</body></html>
